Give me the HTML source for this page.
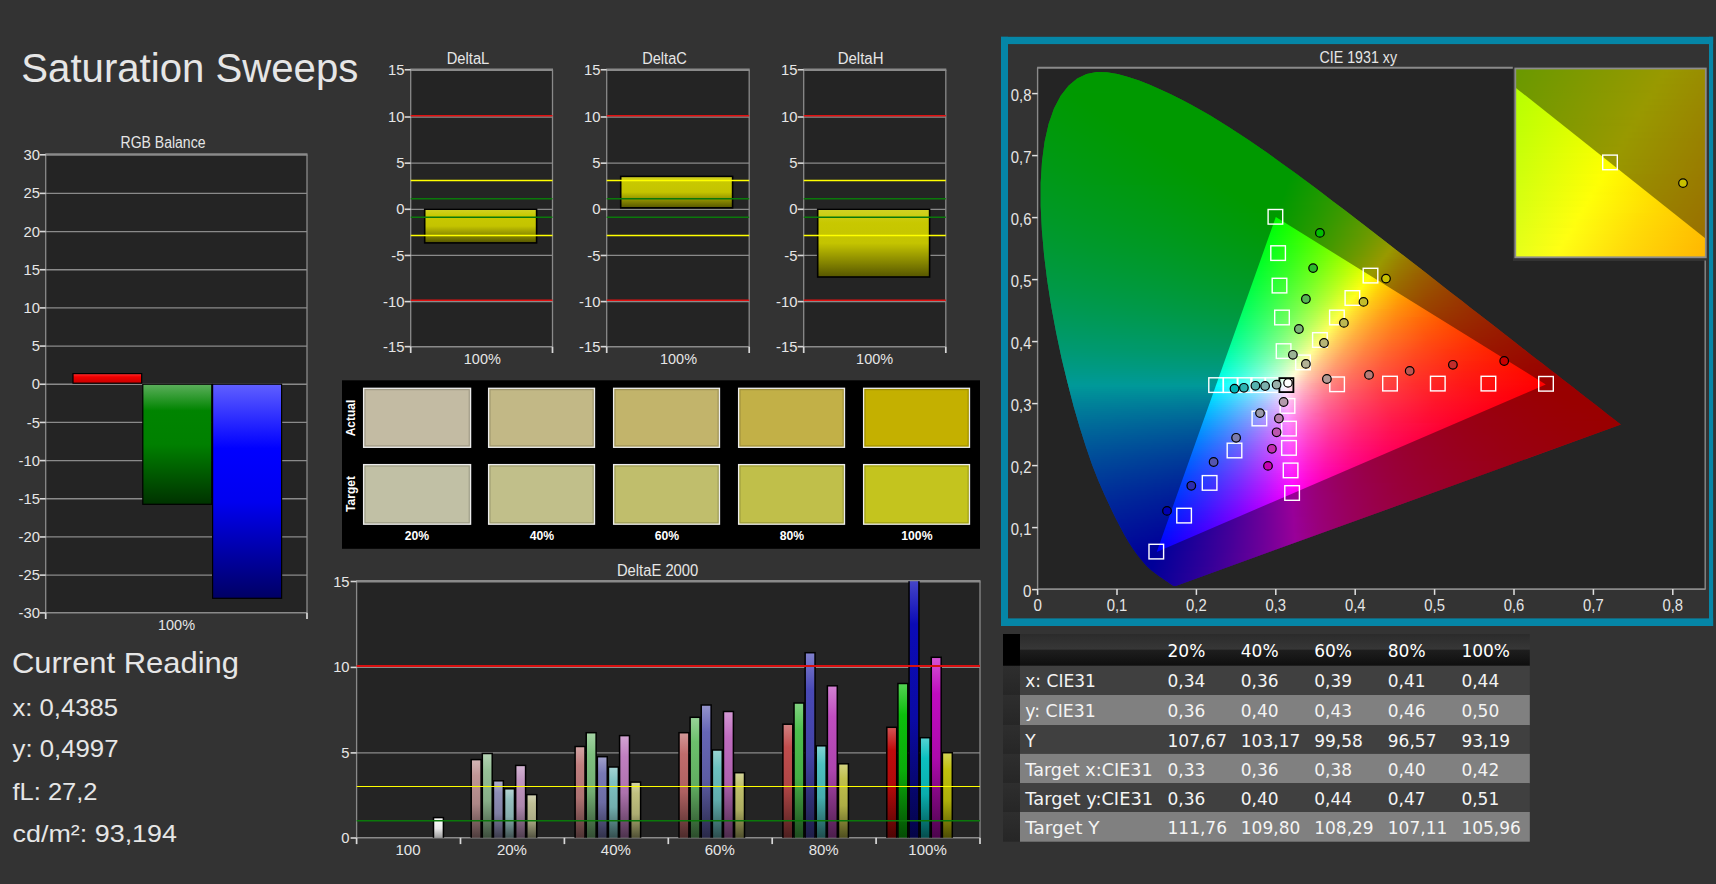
<!DOCTYPE html>
<html><head><meta charset="utf-8"><title>Saturation Sweeps</title>
<style>
html,body{margin:0;padding:0;background:#333333;width:1716px;height:884px;overflow:hidden}
#ov{position:absolute;left:0;top:0;font-family:"Liberation Sans", sans-serif}
#cie{position:absolute;left:1037.6px;top:67.8px;width:667.6000000000001px;height:521.3000000000001px;background:#242424}
#cf{position:absolute;left:0;top:0;width:100%;height:100%;clip-path:polygon(138.2px 518.2px,138.2px 518.2px,137.9px 518.3px,137.6px 518.3px,137.2px 518.3px,136.7px 518.3px,136.1px 518.1px,135.5px 517.9px,134.8px 517.5px,134.1px 517.0px,133.2px 516.4px,132.1px 515.6px,130.5px 514.5px,128.5px 513.2px,126.4px 511.7px,124.3px 510.3px,122.7px 509.2px,121.3px 508.3px,119.9px 507.2px,118.2px 506.0px,116.3px 504.5px,114.3px 502.9px,112.2px 501.1px,110.0px 499.1px,107.6px 496.6px,104.9px 493.5px,101.8px 489.8px,98.5px 485.5px,95.0px 480.4px,91.1px 474.5px,87.0px 467.5px,82.6px 459.3px,77.8px 449.9px,72.5px 439.0px,66.8px 426.7px,60.7px 412.6px,54.5px 396.9px,48.4px 379.2px,42.2px 359.7px,36.0px 338.4px,30.0px 315.3px,24.1px 290.9px,18.7px 265.4px,13.8px 239.4px,9.7px 213.3px,6.5px 187.5px,4.3px 162.4px,3.1px 138.3px,3.1px 115.3px,4.4px 93.8px,7.0px 74.0px,11.0px 56.2px,16.4px 40.7px,23.1px 27.9px,30.9px 17.9px,39.6px 10.7px,49.0px 6.3px,59.0px 4.3px,69.3px 4.4px,79.9px 6.1px,90.7px 9.1px,101.5px 12.8px,112.2px 17.0px,122.8px 21.6px,133.2px 26.5px,143.2px 31.5px,153.2px 36.7px,163.0px 42.1px,172.7px 47.8px,182.3px 53.6px,191.9px 59.7px,201.5px 65.9px,211.0px 72.2px,220.5px 78.7px,230.0px 85.3px,239.5px 92.1px,248.9px 98.9px,258.4px 105.8px,267.8px 112.8px,277.3px 119.8px,286.8px 126.9px,296.2px 134.1px,305.7px 141.3px,315.1px 148.5px,324.5px 155.7px,333.9px 163.0px,343.3px 170.2px,352.6px 177.4px,361.9px 184.6px,371.1px 191.7px,380.2px 198.8px,389.2px 205.8px,398.1px 212.7px,406.9px 219.6px,415.6px 226.4px,424.2px 233.0px,432.6px 239.6px,440.8px 246.0px,448.9px 252.2px,456.7px 258.3px,464.3px 264.2px,471.7px 270.0px,478.7px 275.5px,485.3px 280.6px,491.7px 285.6px,497.8px 290.4px,503.9px 295.0px,509.6px 299.5px,514.7px 303.4px,519.1px 306.8px,523.4px 310.2px,528.6px 314.2px,535.2px 319.3px,542.4px 325.0px,549.1px 330.2px,554.4px 334.3px,558.6px 337.5px,562.1px 340.3px,565.3px 342.8px,568.3px 345.1px,570.9px 347.1px,573.1px 348.9px,574.9px 350.3px,576.4px 351.4px,577.7px 352.4px,578.7px 353.2px,579.6px 353.9px,580.6px 354.7px,581.5px 355.4px,582.3px 356.0px,583.0px 356.5px,583.3px 356.8px,583.4px 356.8px);filter:blur(0.6px)}
#cf i{position:absolute;display:block;height:2px}
#ins{position:absolute;left:1515.3px;top:68.5px;width:190.5px;height:188.8px;overflow:hidden;background:#cc0}
#ins i{position:absolute;display:block;left:0;width:100%;height:3px}

</style></head><body>
<div id="cie"><div id="cf"><i style="left:51.4px;top:3.2px;width:26px;background:linear-gradient(90deg,#00ff00 0px,#00ff00 26px)"></i><i style="left:44.4px;top:5.2px;width:42px;background:linear-gradient(90deg,#00ff00 0px,#00ff00 42px)"></i><i style="left:40.4px;top:7.2px;width:53px;background:linear-gradient(90deg,#00ff00 0px,#00ff00 53px)"></i><i style="left:36.4px;top:9.2px;width:63px;background:linear-gradient(90deg,#00ff00 0px,#00ff00 63px)"></i><i style="left:34.4px;top:11.2px;width:71px;background:linear-gradient(90deg,#00ff00 0px,#00ff00 71px)"></i><i style="left:31.4px;top:13.2px;width:79px;background:linear-gradient(90deg,#00ff00 0px,#00ff00 79px)"></i><i style="left:29.4px;top:15.2px;width:86px;background:linear-gradient(90deg,#00ff00 0px,#00ff00 86px)"></i><i style="left:27.4px;top:17.2px;width:92px;background:linear-gradient(90deg,#00ff00 0px,#00ff00 92px)"></i><i style="left:26.4px;top:19.2px;width:98px;background:linear-gradient(90deg,#00ff01 0px,#00ff00 98px)"></i><i style="left:24.4px;top:21.2px;width:104px;background:linear-gradient(90deg,#00ff02 0px,#00ff00 104px)"></i><i style="left:23.4px;top:23.2px;width:109px;background:linear-gradient(90deg,#00ff03 0px,#00ff00 109px)"></i><i style="left:21.4px;top:25.2px;width:116px;background:linear-gradient(90deg,#00ff04 0px,#00ff00 19px,#00ff00 116px)"></i><i style="left:20.4px;top:27.2px;width:121px;background:linear-gradient(90deg,#00ff05 0px,#00ff00 23px,#00ff00 121px)"></i><i style="left:19.4px;top:29.2px;width:126px;background:linear-gradient(90deg,#00ff06 0px,#00ff00 27px,#00ff00 126px)"></i><i style="left:18.4px;top:31.2px;width:130px;background:linear-gradient(90deg,#00ff07 0px,#00ff00 31px,#00ff00 130px)"></i><i style="left:17.4px;top:33.2px;width:135px;background:linear-gradient(90deg,#00ff08 0px,#00ff00 35px,#00ff00 135px)"></i><i style="left:15.4px;top:35.2px;width:141px;background:linear-gradient(90deg,#00ff09 0px,#00ff00 41px,#00ff00 141px)"></i><i style="left:14.4px;top:37.2px;width:146px;background:linear-gradient(90deg,#00ff0a 0px,#00ff00 45px,#00ff00 146px)"></i><i style="left:13.4px;top:39.2px;width:150px;background:linear-gradient(90deg,#00ff0b 0px,#00ff00 49px,#00ff00 150px)"></i><i style="left:13.4px;top:41.2px;width:154px;background:linear-gradient(90deg,#00ff0c 0px,#00ff00 52px,#00ff00 154px)"></i><i style="left:12.4px;top:43.2px;width:158px;background:linear-gradient(90deg,#00ff0d 0px,#00ff00 56px,#00ff00 158px)"></i><i style="left:11.4px;top:45.2px;width:163px;background:linear-gradient(90deg,#00ff0e 0px,#00ff00 61px,#00ff00 163px)"></i><i style="left:11.4px;top:47.2px;width:166px;background:linear-gradient(90deg,#00ff0e 0px,#00ff00 64px,#00ff00 166px)"></i><i style="left:10.4px;top:49.2px;width:170px;background:linear-gradient(90deg,#00ff0f 0px,#00ff00 68px,#00ff00 170px)"></i><i style="left:9.4px;top:51.2px;width:174px;background:linear-gradient(90deg,#00ff10 0px,#00ff00 72px,#00ff00 174px)"></i><i style="left:9.4px;top:53.2px;width:178px;background:linear-gradient(90deg,#00ff11 0px,#00ff00 76px,#00ff00 178px)"></i><i style="left:8.4px;top:55.2px;width:182px;background:linear-gradient(90deg,#00ff12 0px,#00ff00 80px,#00ff00 182px)"></i><i style="left:7.4px;top:57.2px;width:186px;background:linear-gradient(90deg,#00ff13 0px,#00ff00 84px,#00ff00 186px)"></i><i style="left:7.4px;top:59.2px;width:189px;background:linear-gradient(90deg,#00ff14 0px,#00ff00 87px,#00ff00 189px)"></i><i style="left:6.4px;top:61.2px;width:193px;background:linear-gradient(90deg,#00ff15 0px,#00ff00 91px,#00ff00 193px)"></i><i style="left:6.4px;top:63.2px;width:196px;background:linear-gradient(90deg,#00ff16 0px,#00ff00 95px,#00ff00 196px)"></i><i style="left:6.4px;top:65.2px;width:199px;background:linear-gradient(90deg,#00ff17 0px,#00ff00 98px,#00ff00 199px)"></i><i style="left:5.4px;top:67.2px;width:203px;background:linear-gradient(90deg,#00ff18 0px,#00ff00 102px,#00ff00 203px)"></i><i style="left:5.4px;top:69.2px;width:206px;background:linear-gradient(90deg,#00ff19 0px,#00ff00 105px,#00ff00 206px)"></i><i style="left:4.4px;top:71.2px;width:210px;background:linear-gradient(90deg,#00ff1a 0px,#00ff00 109px,#00ff00 210px)"></i><i style="left:4.4px;top:73.2px;width:213px;background:linear-gradient(90deg,#00ff1b 0px,#00ff00 113px,#00ff00 213px)"></i><i style="left:4.4px;top:75.2px;width:216px;background:linear-gradient(90deg,#00ff1c 0px,#00ff00 116px,#00ff00 216px)"></i><i style="left:3.4px;top:77.2px;width:220px;background:linear-gradient(90deg,#00ff1d 0px,#00ff00 120px,#00ff00 220px)"></i><i style="left:3.4px;top:79.2px;width:223px;background:linear-gradient(90deg,#00ff1e 0px,#00ff00 123px,#00ff00 223px)"></i><i style="left:3.4px;top:81.2px;width:226px;background:linear-gradient(90deg,#00ff1e 0px,#00ff00 127px,#00ff00 226px)"></i><i style="left:3.4px;top:83.2px;width:229px;background:linear-gradient(90deg,#00ff1f 0px,#00ff00 130px,#00ff00 229px)"></i><i style="left:2.4px;top:85.2px;width:232px;background:linear-gradient(90deg,#00ff21 0px,#00ff00 134px,#00ff00 232px)"></i><i style="left:2.4px;top:87.2px;width:235px;background:linear-gradient(90deg,#00ff21 0px,#00ff00 137px,#00ff00 235px)"></i><i style="left:2.4px;top:89.2px;width:238px;background:linear-gradient(90deg,#00ff22 0px,#00ff00 140px,#00ff00 238px)"></i><i style="left:1.4px;top:91.2px;width:242px;background:linear-gradient(90deg,#00ff24 0px,#00ff00 145px,#00ff00 242px)"></i><i style="left:1.4px;top:93.2px;width:245px;background:linear-gradient(90deg,#00ff25 0px,#00ff00 148px,#00ff00 245px)"></i><i style="left:1.4px;top:95.2px;width:247px;background:linear-gradient(90deg,#00ff25 0px,#00ff00 151px,#00ff00 247px)"></i><i style="left:1.4px;top:97.2px;width:250px;background:linear-gradient(90deg,#00ff26 0px,#00ff00 154px,#00ff00 250px)"></i><i style="left:1.4px;top:99.2px;width:253px;background:linear-gradient(90deg,#00ff27 0px,#00ff00 158px,#00ff00 253px)"></i><i style="left:1.4px;top:101.2px;width:256px;background:linear-gradient(90deg,#00ff28 0px,#00ff00 161px,#00ff00 253px,#03ff00 256px)"></i><i style="left:1.4px;top:103.2px;width:258px;background:linear-gradient(90deg,#00ff29 0px,#00ff00 164px,#00ff00 252px,#07ff00 258px)"></i><i style="left:0.4px;top:105.2px;width:262px;background:linear-gradient(90deg,#00ff2b 0px,#00ff00 168px,#00ff00 253px,#0bff00 262px)"></i><i style="left:0.4px;top:107.2px;width:265px;background:linear-gradient(90deg,#00ff2c 0px,#00ff00 171px,#00ff00 252px,#10ff00 265px)"></i><i style="left:0.4px;top:109.2px;width:268px;background:linear-gradient(90deg,#00ff2d 0px,#00ff00 175px,#00ff00 251px,#15ff00 268px)"></i><i style="left:0.4px;top:111.2px;width:270px;background:linear-gradient(90deg,#00ff2e 0px,#00ff00 178px,#00ff00 251px,#19ff00 270px)"></i><i style="left:0.4px;top:113.2px;width:273px;background:linear-gradient(90deg,#00ff2f 0px,#00ff00 181px,#00ff00 250px,#1eff00 273px)"></i><i style="left:0.4px;top:115.2px;width:276px;background:linear-gradient(90deg,#00ff30 0px,#00ff00 184px,#00ff00 249px,#24ff00 276px)"></i><i style="left:0.4px;top:117.2px;width:278px;background:linear-gradient(90deg,#00ff31 0px,#00ff1a 98px,#00ff00 188px,#00ff00 248px,#28ff00 278px)"></i><i style="left:0.4px;top:119.2px;width:281px;background:linear-gradient(90deg,#00ff32 0px,#00ff1b 100px,#00ff00 191px,#00ff00 248px,#2dff00 281px)"></i><i style="left:0.4px;top:121.2px;width:284px;background:linear-gradient(90deg,#00ff33 0px,#00ff1b 102px,#00ff00 194px,#00ff00 247px,#33ff00 284px)"></i><i style="left:0.4px;top:123.2px;width:286px;background:linear-gradient(90deg,#00ff34 0px,#00ff1c 104px,#00ff00 197px,#00ff00 246px,#37ff00 286px)"></i><i style="left:0.4px;top:125.2px;width:289px;background:linear-gradient(90deg,#00ff35 0px,#00ff1c 106px,#00ff00 200px,#00ff00 246px,#3dff00 289px)"></i><i style="left:0.4px;top:127.2px;width:292px;background:linear-gradient(90deg,#00ff36 0px,#00ff1d 108px,#00ff00 204px,#00ff00 245px,#43ff00 292px)"></i><i style="left:0.4px;top:129.2px;width:294px;background:linear-gradient(90deg,#00ff38 0px,#00ff1d 110px,#00ff00 207px,#00ff00 244px,#48ff00 294px)"></i><i style="left:0.4px;top:131.2px;width:297px;background:linear-gradient(90deg,#00ff39 0px,#00ff1e 112px,#00ff00 210px,#00ff00 244px,#4eff00 297px)"></i><i style="left:0.4px;top:133.2px;width:300px;background:linear-gradient(90deg,#00ff3a 0px,#00ff1f 113px,#00ff00 213px,#00ff00 243px,#55ff00 300px)"></i><i style="left:0.4px;top:135.2px;width:302px;background:linear-gradient(90deg,#00ff3b 0px,#00ff20 115px,#00ff00 216px,#00ff00 242px,#5aff00 302px)"></i><i style="left:0.4px;top:137.2px;width:305px;background:linear-gradient(90deg,#00ff3c 0px,#00ff20 117px,#00ff00 220px,#00ff00 241px,#29ff00 270px,#61ff00 305px)"></i><i style="left:0.4px;top:139.2px;width:307px;background:linear-gradient(90deg,#00ff3d 0px,#00ff21 119px,#00ff00 223px,#00ff00 241px,#32ff00 275px,#66ff00 307px)"></i><i style="left:0.4px;top:141.2px;width:310px;background:linear-gradient(90deg,#00ff3f 0px,#00ff22 121px,#00ff00 226px,#00ff00 240px,#33ff00 275px,#6dff00 310px)"></i><i style="left:0.4px;top:143.2px;width:313px;background:linear-gradient(90deg,#00ff40 0px,#00ff27 107px,#00ff00 229px,#00ff00 239px,#35ff00 275px,#74ff00 313px)"></i><i style="left:0.4px;top:145.2px;width:315px;background:linear-gradient(90deg,#00ff41 0px,#00ff26 115px,#00ff00 239px,#3bff00 278px,#7aff00 315px)"></i><i style="left:0.4px;top:147.2px;width:318px;background:linear-gradient(90deg,#00ff42 0px,#00ff25 124px,#00ff00 238px,#3eff00 279px,#81ff00 318px)"></i><i style="left:1.4px;top:149.2px;width:319px;background:linear-gradient(90deg,#00ff43 0px,#00ff25 127px,#00ff01 236px,#3eff00 277px,#87ff00 319px)"></i><i style="left:1.4px;top:151.2px;width:322px;background:linear-gradient(90deg,#00ff45 0px,#00ff26 127px,#00ff02 236px,#46ff00 281px,#8fff00 322px)"></i><i style="left:1.4px;top:153.2px;width:325px;background:linear-gradient(90deg,#00ff46 0px,#00ff27 127px,#00ff04 235px,#0fff00 245px,#49ff00 282px,#98ff00 325px)"></i><i style="left:1.4px;top:155.2px;width:327px;background:linear-gradient(90deg,#00ff47 0px,#00ff29 126px,#00ff05 234px,#14ff00 248px,#49ff00 281px,#9eff00 327px)"></i><i style="left:1.4px;top:157.2px;width:330px;background:linear-gradient(90deg,#00ff49 0px,#00ff2a 125px,#00ff07 233px,#1aff00 251px,#4dff00 282px,#a7ff00 330px)"></i><i style="left:1.4px;top:159.2px;width:332px;background:linear-gradient(90deg,#00ff4a 0px,#00ff2c 126px,#00ff08 233px,#20ff00 254px,#54ff00 285px,#aeff00 332px)"></i><i style="left:1.4px;top:161.2px;width:335px;background:linear-gradient(90deg,#00ff4b 0px,#00ff2d 125px,#00ff0a 232px,#28ff00 258px,#56ff00 285px,#b7ff00 335px)"></i><i style="left:1.4px;top:163.2px;width:338px;background:linear-gradient(90deg,#00ff4d 0px,#00ff2f 124px,#00ff0c 231px,#2eff00 261px,#59ff00 286px,#c0ff00 338px)"></i><i style="left:1.4px;top:165.2px;width:340px;background:linear-gradient(90deg,#00ff4e 0px,#00ff30 125px,#00ff0d 231px,#35ff00 264px,#5fff00 288px,#93ff00 315px,#c7ff00 340px)"></i><i style="left:2.4px;top:167.2px;width:342px;background:linear-gradient(90deg,#00ff4f 0px,#00ff32 123px,#00ff0f 229px,#3cff00 266px,#63ff00 288px,#99ff00 316px,#d1ff00 342px)"></i><i style="left:2.4px;top:169.2px;width:344px;background:linear-gradient(90deg,#00ff50 0px,#00ff33 123px,#00ff11 228px,#42ff00 269px,#65ff00 288px,#9eff00 317px,#d9ff00 344px)"></i><i style="left:2.4px;top:171.2px;width:347px;background:linear-gradient(90deg,#00ff52 0px,#00ff35 123px,#01ff12 228px,#4bff00 273px,#6dff00 291px,#a7ff00 320px,#e4ff00 347px)"></i><i style="left:2.4px;top:173.2px;width:350px;background:linear-gradient(90deg,#00ff53 0px,#00ff36 122px,#00ff14 227px,#52ff00 276px,#71ff00 292px,#aeff00 322px,#eeff00 350px)"></i><i style="left:2.4px;top:175.2px;width:352px;background:linear-gradient(90deg,#00ff55 0px,#00ff38 122px,#00ff16 226px,#5aff00 279px,#73ff00 292px,#b3ff00 323px,#f7ff00 352px)"></i><i style="left:3.4px;top:177.2px;width:354px;background:linear-gradient(90deg,#00ff56 0px,#00ff39 121px,#00ff18 224px,#32ff0c 255px,#62ff00 281px,#71ff00 289px,#b4ff00 321px,#fdff00 352px,#fffc00 354px)"></i><i style="left:3.4px;top:179.2px;width:356px;background:linear-gradient(90deg,#00ff57 0px,#00ff3b 121px,#00ff1a 224px,#34ff0d 255px,#6bff00 285px,#b3ff00 319px,#ffff00 351px,#fff300 356px)"></i><i style="left:3.4px;top:181.2px;width:359px;background:linear-gradient(90deg,#00ff59 0px,#00ff3d 120px,#00ff1c 223px,#39ff0e 257px,#78ff00 290px,#b8ff00 320px,#feff00 349px,#ffe900 359px)"></i><i style="left:3.4px;top:183.2px;width:362px;background:linear-gradient(90deg,#00ff5a 0px,#00ff3e 120px,#00ff1e 222px,#37ff10 255px,#76ff01 288px,#b9ff00 319px,#ffff00 348px,#ffdf00 362px)"></i><i style="left:3.4px;top:185.2px;width:364px;background:linear-gradient(90deg,#00ff5c 0px,#00ff40 120px,#01ff1f 222px,#3bff12 256px,#78ff03 288px,#b9ff00 318px,#feff00 346px,#ffd700 364px)"></i><i style="left:3.4px;top:187.2px;width:367px;background:linear-gradient(90deg,#00ff5e 0px,#00ff42 119px,#00ff21 221px,#39ff14 254px,#77ff06 286px,#90ff00 298px,#c6ff00 322px,#ffff00 345px,#ffce00 367px)"></i><i style="left:4.4px;top:189.2px;width:368px;background:linear-gradient(90deg,#00ff5f 0px,#00ff44 118px,#00ff23 219px,#39ff16 252px,#77ff08 284px,#99ff00 300px,#feff00 342px,#ffc700 368px)"></i><i style="left:4.4px;top:191.2px;width:371px;background:linear-gradient(90deg,#00ff61 0px,#00ff45 118px,#00ff25 218px,#35ff19 249px,#75ff0a 282px,#a3ff00 303px,#fdff00 340px,#ffd900 357px,#ffbf00 371px)"></i><i style="left:4.4px;top:193.2px;width:373px;background:linear-gradient(90deg,#00ff62 0px,#00ff47 118px,#00ff27 218px,#3aff1a 251px,#78ff0c 282px,#acff00 306px,#feff00 339px,#ffd800 356px,#ffb900 373px)"></i><i style="left:4.4px;top:195.2px;width:376px;background:linear-gradient(90deg,#00ff64 0px,#00ff49 117px,#00ff29 217px,#38ff1d 249px,#76ff0f 280px,#b7ff00 309px,#fffe00 338px,#ffd400 356px,#ffb100 376px)"></i><i style="left:5.4px;top:197.2px;width:378px;background:linear-gradient(90deg,#00ff65 0px,#00ff4b 116px,#00ff2b 215px,#36ff1f 246px,#76ff11 278px,#c3ff00 312px,#ffff00 335px,#ffd100 355px,#ffaa00 378px)"></i><i style="left:5.4px;top:199.2px;width:380px;background:linear-gradient(90deg,#00ff67 0px,#00ff4c 116px,#01ff2d 215px,#3aff21 247px,#76ff13 277px,#ceff00 315px,#fffe00 334px,#ffce00 355px,#ffa400 380px)"></i><i style="left:5.4px;top:201.2px;width:383px;background:linear-gradient(90deg,#00ff69 0px,#00ff4e 116px,#00ff2f 214px,#3aff23 246px,#79ff15 277px,#daff00 318px,#ffff00 332px,#ffca00 355px,#ff9d00 383px)"></i><i style="left:5.4px;top:203.2px;width:385px;background:linear-gradient(90deg,#00ff6a 0px,#00ff50 115px,#00ff32 213px,#38ff26 244px,#77ff18 275px,#b8ff0a 303px,#e5ff00 321px,#feff00 330px,#ffc500 356px,#ff9800 385px)"></i><i style="left:6.4px;top:205.2px;width:387px;background:linear-gradient(90deg,#00ff6c 0px,#00ff52 114px,#00ff34 211px,#34ff29 240px,#75ff1b 272px,#b8ff0c 301px,#ffff00 328px,#ffe100 340px,#ffc400 354px,#ffa900 370px,#ff9200 387px)"></i><i style="left:6.4px;top:207.2px;width:389px;background:linear-gradient(90deg,#00ff6e 0px,#00ff54 114px,#00ff36 211px,#39ff2a 242px,#78ff1d 272px,#b9ff0f 300px,#feff00 326px,#ffdb00 341px,#ffbf00 355px,#ffa500 371px,#ff8d00 389px)"></i><i style="left:6.4px;top:209.2px;width:392px;background:linear-gradient(90deg,#00ff6f 0px,#00ff56 114px,#00ff38 210px,#37ff2d 240px,#76ff20 270px,#b8ff12 298px,#ffff03 325px,#ffdb00 339px,#ffbc00 355px,#ffa100 372px,#ff8700 392px)"></i><i style="left:6.4px;top:211.2px;width:395px;background:linear-gradient(90deg,#00ff71 0px,#00ff58 113px,#00ff3b 209px,#35ff2f 238px,#76ff22 269px,#b9ff14 297px,#feff06 323px,#ffe600 333px,#ffb900 355px,#ff9b00 374px,#ff8200 395px)"></i><i style="left:7.4px;top:213.2px;width:396px;background:linear-gradient(90deg,#00ff73 0px,#00ff5a 113px,#01ff3d 208px,#39ff31 238px,#76ff25 267px,#b7ff18 294px,#fffe09 321px,#ffdb00 335px,#ffb500 354px,#ff9700 374px,#ff7e00 396px)"></i><i style="left:7.4px;top:215.2px;width:399px;background:linear-gradient(90deg,#00ff75 0px,#00ff5c 112px,#00ff3f 207px,#39ff34 237px,#77ff27 266px,#b8ff1a 293px,#feff0c 319px,#ffce00 339px,#ffb200 354px,#ff9300 375px,#ff7800 399px)"></i><i style="left:7.4px;top:217.2px;width:401px;background:linear-gradient(90deg,#00ff76 0px,#00ff5e 112px,#00ff42 206px,#37ff37 235px,#75ff2a 264px,#b4ff1e 290px,#fffe0f 318px,#ffd304 335px,#ffaf00 354px,#ff9000 376px,#ff7400 401px)"></i><i style="left:8.4px;top:219.2px;width:403px;background:linear-gradient(90deg,#00ff78 0px,#00ff60 110px,#00ff44 204px,#35ff3a 232px,#75ff2d 262px,#b7ff20 289px,#ffff12 315px,#ffd206 333px,#ffbc00 344px,#ffac00 353px,#ff8c00 376px,#ff7000 403px)"></i><i style="left:8.4px;top:221.2px;width:405px;background:linear-gradient(90deg,#00ff7a 0px,#00ff62 110px,#00ff46 204px,#38ff3b 233px,#76ff30 261px,#b3ff24 286px,#fffe15 314px,#ffd008 332px,#ffa900 353px,#ff8800 377px,#ff6c00 405px)"></i><i style="left:8.4px;top:223.2px;width:408px;background:linear-gradient(90deg,#00ff7c 0px,#00ff65 110px,#00ff49 203px,#38ff3e 232px,#78ff32 261px,#b9ff26 287px,#ffff18 312px,#ffcf0a 331px,#ffa600 353px,#ff8500 378px,#ff6700 408px)"></i><i style="left:9.4px;top:225.2px;width:410px;background:linear-gradient(90deg,#00ff7e 0px,#00ff67 109px,#00ff4b 201px,#34ff42 228px,#74ff36 257px,#b2ff2a 282px,#fffd1b 310px,#ffcd0d 329px,#ffa400 352px,#ff8000 379px,#ff6300 410px)"></i><i style="left:9.4px;top:227.2px;width:412px;background:linear-gradient(90deg,#00ff80 0px,#00ff69 109px,#01ff4e 201px,#3aff43 230px,#79ff37 258px,#b8ff2c 283px,#ffff1f 308px,#ffcc0f 328px,#ffa202 351px,#ff7e00 379px,#ff5f00 412px)"></i><i style="left:9.4px;top:229.2px;width:415px;background:linear-gradient(90deg,#00ff82 0px,#00ff6b 108px,#00ff51 200px,#3aff46 229px,#77ff3b 256px,#b9ff2f 282px,#feff22 306px,#ffca11 327px,#ff9f04 351px,#ff9400 359px,#ff7a00 380px,#ff5b00 415px)"></i><i style="left:10.4px;top:231.2px;width:416px;background:linear-gradient(90deg,#00ff84 0px,#00ff6e 107px,#00ff53 198px,#36ff4a 225px,#75ff3e 253px,#b7ff32 279px,#fcff26 303px,#ffc713 326px,#ff9c05 350px,#ff8c00 362px,#ff7700 380px,#ff5800 416px)"></i><i style="left:10.4px;top:233.2px;width:419px;background:linear-gradient(90deg,#00ff86 0px,#00ff70 107px,#01ff56 198px,#3aff4c 226px,#78ff41 253px,#b8ff35 278px,#feff29 302px,#ffc716 324px,#ff9a07 350px,#ff8600 365px,#ff7400 381px,#ff5400 419px)"></i><i style="left:10.4px;top:235.2px;width:421px;background:linear-gradient(90deg,#00ff88 0px,#00ff72 107px,#00ff59 197px,#3aff4f 225px,#78ff44 252px,#b9ff38 277px,#fdff2d 300px,#ffc418 324px,#ff9708 350px,#ff8000 368px,#ff7100 382px,#ff5100 421px)"></i><i style="left:10.4px;top:237.2px;width:424px;background:linear-gradient(90deg,#00ff8a 0px,#00ff75 106px,#00ff5b 196px,#37ff52 223px,#76ff47 250px,#b7ff3c 275px,#feff30 299px,#ffe025 310px,#ffc41b 322px,#ff950a 349px,#ff7a00 371px,#ff6e00 383px,#ff4e00 424px)"></i><i style="left:11.4px;top:239.2px;width:426px;background:linear-gradient(90deg,#00ff8c 0px,#00ff77 105px,#00ff5e 194px,#33ff56 219px,#74ff4b 247px,#b6ff40 272px,#fdff34 296px,#ffda25 310px,#ffc11c 321px,#ff910b 349px,#ff7300 374px,#ff5e00 398px,#ff4a00 426px)"></i><i style="left:11.4px;top:241.2px;width:428px;background:linear-gradient(90deg,#00ff8e 0px,#00ff79 105px,#00ff61 194px,#3bff57 222px,#79ff4d 248px,#b9ff42 272px,#ffff37 295px,#ffdd2a 307px,#ffc11f 319px,#ffa715 333px,#ff900d 348px,#ff6e00 377px,#ff4700 428px)"></i><i style="left:12.4px;top:243.2px;width:430px;background:linear-gradient(90deg,#00ff90 0px,#00ff7c 104px,#00ff64 192px,#39ff5b 219px,#77ff51 245px,#b8ff46 269px,#fdff3b 292px,#ffdb2d 305px,#ffc022 317px,#ffa518 331px,#ff8d0e 347px,#ff6900 379px,#ff4400 430px)"></i><i style="left:12.4px;top:245.2px;width:432px;background:linear-gradient(90deg,#00ff92 0px,#00ff7e 104px,#00ff67 191px,#37ff5e 217px,#75ff54 243px,#b9ff4a 268px,#ffff3e 291px,#ffdf31 302px,#ffc025 315px,#ffa41a 330px,#ff8c10 346px,#ff6400 382px,#ff4100 432px)"></i><i style="left:12.4px;top:247.2px;width:435px;background:linear-gradient(90deg,#00ff95 0px,#00ff81 104px,#01ff6a 191px,#3bff61 218px,#78ff57 243px,#baff4d 267px,#feff42 289px,#ffda33 302px,#ffbc27 315px,#ffa11b 330px,#ff8911 346px,#ff6000 385px,#ff3e00 435px)"></i><i style="left:13.4px;top:249.2px;width:436px;background:linear-gradient(90deg,#00ff97 0px,#00ff84 103px,#00ff6d 189px,#3bff64 216px,#78ff5b 241px,#b8ff51 264px,#ffff46 287px,#ffdb37 299px,#ffbb29 313px,#ff9f1d 328px,#ff8613 345px,#ff6f09 365px,#ff5b00 387px,#ff3c00 436px)"></i><i style="left:13.4px;top:251.2px;width:439px;background:linear-gradient(90deg,#00ff99 0px,#00ff86 102px,#00ff70 188px,#39ff68 214px,#76ff5f 239px,#b9ff55 263px,#feff4a 285px,#ffd739 299px,#ffb92b 312px,#ff9e1f 327px,#ff8514 344px,#ff6c0a 366px,#ff5600 391px,#ff3900 439px)"></i><i style="left:13.4px;top:253.2px;width:442px;background:linear-gradient(90deg,#00ff9c 0px,#00ff89 102px,#00ff73 187px,#34ff6c 211px,#74ff62 237px,#b7ff59 261px,#fcff4f 283px,#ffd53b 298px,#ffb82e 311px,#ff9b21 327px,#ff8216 344px,#ff690a 367px,#ff5200 394px,#ff3600 442px)"></i><i style="left:14.4px;top:255.2px;width:443px;background:linear-gradient(90deg,#00ff9e 0px,#00ff8c 101px,#00ff76 186px,#3bff6e 212px,#77ff66 236px,#b8ff5c 259px,#feff52 281px,#ffd63f 295px,#ffb630 309px,#ff9923 325px,#ff8017 343px,#ff650b 368px,#ff4e00 396px,#ff3300 443px)"></i><i style="left:14.4px;top:257.2px;width:446px;background:linear-gradient(90deg,#00ffa0 0px,#00ff8f 101px,#00ff7a 185px,#3aff72 211px,#77ff69 235px,#b9ff60 258px,#fdff57 279px,#ffd442 294px,#ffb433 308px,#ff9825 324px,#ff7d18 343px,#ff620b 369px,#ff4a00 399px,#ff3100 446px)"></i><i style="left:15.4px;top:259.2px;width:447px;background:linear-gradient(90deg,#00ffa3 0px,#00ff92 99px,#00ff7d 183px,#35ff76 207px,#75ff6d 232px,#b7ff64 255px,#ffff5b 277px,#ffd848 290px,#ffb536 305px,#ff9627 322px,#ff7c1a 341px,#ff5f0c 369px,#ff4700 401px,#ff2e00 447px)"></i><i style="left:15.4px;top:261.2px;width:450px;background:linear-gradient(90deg,#00ffa5 0px,#00ff95 99px,#01ff80 183px,#3aff79 208px,#78ff71 232px,#b8ff68 254px,#fdff5f 275px,#ffd449 290px,#ffb138 305px,#ff9329 322px,#ff791c 341px,#ff5c0d 370px,#ff4200 405px,#ff2c00 450px)"></i><i style="left:15.4px;top:263.2px;width:452px;background:linear-gradient(90deg,#00ffa8 0px,#00ff97 99px,#00ff84 182px,#3aff7d 207px,#79ff75 231px,#b9ff6c 253px,#ffff63 274px,#ffd44d 288px,#ffb23b 303px,#ff932c 320px,#ff781d 340px,#ff590d 371px,#ff3f00 408px,#ff2a00 452px)"></i><i style="left:16.4px;top:265.2px;width:454px;background:linear-gradient(90deg,#00ffaa 0px,#00ff9a 98px,#00ff88 180px,#37ff81 204px,#76ff79 228px,#b7ff71 250px,#fdff68 271px,#ffd350 286px,#ffb03e 301px,#ff902d 319px,#ff751f 339px,#ff560e 371px,#ff3c00 410px,#ff2700 454px)"></i><i style="left:16.4px;top:267.2px;width:457px;background:linear-gradient(90deg,#00ffad 0px,#00ff9e 97px,#00ff8b 179px,#32ff85 201px,#74ff7d 226px,#b5ff75 248px,#ffff6c 270px,#ffd656 283px,#ffb041 299px,#ff9030 317px,#ff7421 338px,#ff530f 372px,#ff3900 413px,#ff2500 457px)"></i><i style="left:17.4px;top:269.2px;width:458px;background:linear-gradient(90deg,#00ffaf 0px,#00ffa0 97px,#00ff8f 178px,#3aff88 202px,#77ff81 225px,#baff79 247px,#feff71 267px,#ffd258 282px,#ffaf44 297px,#ff8f32 315px,#ff7322 336px,#ff510f 372px,#ff3500 415px,#ff2300 458px)"></i><i style="left:17.4px;top:271.2px;width:461px;background:linear-gradient(90deg,#00ffb2 0px,#00ffa4 96px,#00ff93 177px,#37ff8c 200px,#75ff85 223px,#b7ff7e 245px,#fcff76 265px,#fffe76 266px,#ffcd59 282px,#ffab45 297px,#ff8c34 315px,#ff7024 336px,#ff4e10 373px,#ff3200 418px,#ff2000 461px)"></i><i style="left:17.4px;top:273.2px;width:463px;background:linear-gradient(90deg,#00ffb5 0px,#00ffa7 96px,#00ff96 176px,#34ff91 198px,#75ff8a 222px,#b9ff82 244px,#feff7b 264px,#ffd15f 279px,#ffab49 295px,#ff8a36 314px,#ff6f26 335px,#ff4d12 371px,#ff3202 416px,#ff1e00 463px)"></i><i style="left:18.4px;top:275.2px;width:465px;background:linear-gradient(90deg,#00ffb8 0px,#00ffaa 95px,#01ff9a 175px,#3cff94 199px,#78ff8e 221px,#baff87 242px,#fcff80 261px,#fffe7f 262px,#ffcf62 277px,#ffa94c 293px,#ff8838 312px,#ff6c27 334px,#ff4b13 370px,#ff3003 415px,#ff1c00 465px)"></i><i style="left:18.4px;top:277.2px;width:467px;background:linear-gradient(90deg,#00ffbb 0px,#00ffae 95px,#00ff9e 174px,#3cff98 198px,#79ff92 220px,#bbff8b 241px,#feff85 260px,#ffd067 275px,#ffaa50 291px,#ff883b 310px,#ff6b29 333px,#ff4a15 369px,#ff3004 413px,#ff2900 428px,#ff1a00 467px)"></i><i style="left:19.4px;top:279.2px;width:469px;background:linear-gradient(90deg,#00ffbd 0px,#00ffa2 172px,#36ff9d 194px,#76ff97 217px,#b9ff90 238px,#fdff8a 257px,#ffcb69 274px,#ffa651 290px,#ff853c 309px,#ff682a 332px,#ff4816 368px,#ff2e05 412px,#ff2600 430px,#ff1800 469px)"></i><i style="left:19.4px;top:281.2px;width:471px;background:linear-gradient(90deg,#00ffc0 0px,#00ffa6 171px,#33ffa2 192px,#74ff9c 215px,#b7ff96 236px,#ffff8f 256px,#ffce6f 271px,#ffa655 288px,#ff843f 308px,#ff672c 331px,#ff4e1c 358px,#ff380d 390px,#ff2400 433px,#ff1700 471px)"></i><i style="left:19.4px;top:283.2px;width:474px;background:linear-gradient(90deg,#00ffc3 0px,#00ffaa 171px,#3bffa5 194px,#77ffa0 215px,#b8ff9a 235px,#fdff94 254px,#ffcd73 270px,#ffa558 287px,#ff8241 307px,#ff652e 330px,#ff4c1d 358px,#ff360e 391px,#ff2100 436px,#ff1500 474px)"></i><i style="left:20.4px;top:285.2px;width:476px;background:linear-gradient(90deg,#00ffc6 0px,#00ffaf 169px,#38ffaa 191px,#78ffa5 213px,#b9ffa0 233px,#ffff9a 252px,#ffcd78 267px,#ffa55c 284px,#ff8143 305px,#ff632f 329px,#ff4a1e 357px,#ff340f 391px,#ff1f00 438px,#ff1300 476px)"></i><i style="left:20.4px;top:287.2px;width:478px;background:linear-gradient(90deg,#00ffc9 0px,#00ffb3 168px,#35ffaf 189px,#75ffaa 211px,#b7ffa5 231px,#fdff9f 250px,#ffcb7b 266px,#ffa35f 283px,#ff7f45 304px,#ff6231 328px,#ff481f 357px,#ff3210 391px,#ff1c00 442px,#ff1100 478px)"></i><i style="left:21.4px;top:289.2px;width:480px;background:linear-gradient(90deg,#00ffcd 0px,#01ffb8 167px,#3bffb3 189px,#79ffaf 210px,#b8ffaa 229px,#ffffa5 248px,#ffcc80 263px,#ffa161 281px,#ff7d48 302px,#ff6033 326px,#ff4720 355px,#ff3111 390px,#ff1a00 444px,#ff0f00 480px)"></i><i style="left:21.4px;top:291.2px;width:482px;background:linear-gradient(90deg,#00ffd0 0px,#00ffbc 166px,#38ffb8 187px,#73ffb4 207px,#afffb0 225px,#fffca9 247px,#ffca84 262px,#ff9f64 280px,#ff7c4a 301px,#ff5e34 326px,#ff4421 356px,#ff2f11 391px,#ff1800 447px,#ff0d00 482px)"></i><i style="left:22.4px;top:293.2px;width:484px;background:linear-gradient(90deg,#00ffd3 0px,#00ffc1 164px,#35ffbd 184px,#73ffb9 205px,#b3ffb5 224px,#fffeb0 244px,#ffcb89 259px,#ffa068 277px,#ff7c4d 298px,#ff5c36 324px,#ff3f1f 360px,#ff260d 405px,#ff1600 449px,#ff0c00 484px)"></i><i style="left:22.4px;top:295.2px;width:486px;background:linear-gradient(90deg,#00ffd6 0px,#00ffc6 163px,#2fffc3 181px,#71ffbf 203px,#aaffbc 220px,#feffb7 242px,#fffcb4 243px,#ffc98d 258px,#ff9e6b 276px,#ff794f 298px,#ff5a37 324px,#ff3d20 360px,#ff250d 405px,#ff1300 452px,#ff0a00 486px)"></i><i style="left:23.4px;top:297.2px;width:488px;background:linear-gradient(90deg,#00ffda 0px,#00ffca 162px,#3affc7 183px,#78ffc4 203px,#b6ffc1 221px,#fffebc 240px,#ffca93 255px,#ff9c6e 274px,#ff7751 296px,#ff5939 322px,#ff3b21 359px,#ff230e 404px,#ff1100 455px,#ff0800 488px)"></i><i style="left:23.4px;top:299.2px;width:491px;background:linear-gradient(90deg,#00ffdd 0px,#00ffcf 161px,#37ffcd 181px,#72ffca 200px,#b7ffc7 220px,#feffc3 238px,#fffbc0 239px,#ffc896 254px,#ff9a71 273px,#ff7553 295px,#ff573b 321px,#ff3a23 358px,#ff220f 404px,#ff0f00 458px,#ff0700 491px)"></i><i style="left:24.4px;top:301.2px;width:492px;background:linear-gradient(90deg,#00ffe1 0px,#00ffd4 159px,#31ffd2 177px,#72ffd0 198px,#b1ffcd 216px,#fffdc8 236px,#ffc99c 251px,#ff9a76 270px,#ff7557 292px,#ff563d 319px,#ff3924 356px,#ff2110 402px,#ff0d00 460px,#ff0500 492px)"></i><i style="left:24.4px;top:303.2px;width:495px;background:linear-gradient(90deg,#00ffe4 0px,#01ffda 159px,#3cffd7 180px,#79ffd5 199px,#baffd3 217px,#ffffd0 234px,#ffe0b6 242px,#ffc6a0 250px,#ff9a7a 268px,#ff7459 291px,#ff543e 318px,#ff3725 356px,#ff1f11 402px,#ff0b00 463px,#ff0400 495px)"></i><i style="left:25.4px;top:305.2px;width:496px;background:linear-gradient(90deg,#00ffe8 0px,#00ffdf 157px,#39ffdd 177px,#73ffdb 195px,#b0ffd9 212px,#fffdd5 232px,#ffc7a6 247px,#ff997d 266px,#ff725b 289px,#ff5340 316px,#ff3627 354px,#ff1e13 400px,#ff0900 465px,#ff0200 496px)"></i><i style="left:25.4px;top:307.2px;width:499px;background:linear-gradient(90deg,#00ffec 0px,#00ffe4 156px,#36ffe3 175px,#77ffe1 195px,#b9ffdf 213px,#ffffdd 230px,#ffe3c4 237px,#ffc8ac 245px,#ff9982 264px,#ff725f 287px,#ff5142 315px,#ff3428 353px,#ff1d13 400px,#ff0700 469px,#ff0100 499px)"></i><i style="left:26.4px;top:309.2px;width:501px;background:linear-gradient(90deg,#00fff0 0px,#00ffea 154px,#30ffe9 171px,#70ffe8 191px,#abffe6 207px,#fffce2 228px,#ffddc5 236px,#ffc3ae 244px,#ff9583 263px,#ff6f60 286px,#ff4f43 314px,#ff3329 352px,#ff1b14 400px,#ff0600 471px,#ff0000 501px)"></i><i style="left:26.4px;top:311.2px;width:503px;background:linear-gradient(90deg,#00fff4 0px,#00ffef 154px,#3cffef 174px,#78ffee 192px,#b8ffed 209px,#fffeeb 226px,#ffdecd 234px,#ffc4b4 242px,#ff9588 261px,#ff6e64 284px,#ff4e45 313px,#ff312b 351px,#ff1a15 399px,#ff0400 474px,#ff0000 503px)"></i><i style="left:27.4px;top:313.2px;width:505px;background:linear-gradient(90deg,#00fff8 0px,#00fff5 152px,#35fff5 170px,#71fff4 188px,#a9fff4 203px,#fefff3 223px,#fffcf0 224px,#ffdcd1 232px,#ffc1b8 240px,#ff9189 260px,#ff6a64 284px,#ff4a46 313px,#ff2e2b 352px,#ff1815 400px,#ff0200 476px,#ff0000 505px)"></i><i style="left:27.4px;top:315.2px;width:507px;background:linear-gradient(90deg,#00fffc 0px,#00fffb 151px,#32fffb 168px,#72fffb 187px,#b2fffb 204px,#fffefa 222px,#ffddd9 230px,#ffc2bf 238px,#ffa9a6 247px,#ff918e 258px,#ff6a68 282px,#ff4a48 311px,#ff2e2d 349px,#ff1817 397px,#ff0100 479px,#ff0000 507px)"></i><i style="left:28.4px;top:317.2px;width:509px;background:linear-gradient(90deg,#00feff 0px,#01fdff 150px,#3bfcff 169px,#78fcff 187px,#bafcff 204px,#fffbff 220px,#ffdbde 228px,#ffc0c3 236px,#ffa7aa 245px,#ff8f91 256px,#ff686a 280px,#ff4849 310px,#ff2b2d 350px,#ff1516 400px,#ff0001 476px,#ff0000 509px)"></i><i style="left:28.4px;top:319.2px;width:511px;background:linear-gradient(90deg,#00faff 0px,#00f7ff 149px,#3cf6ff 169px,#79f5ff 187px,#baf5ff 204px,#fff4ff 220px,#ffd5df 228px,#ffbbc4 236px,#ffa3ab 245px,#ff8b92 256px,#ff646a 281px,#ff444a 311px,#ff292d 352px,#ff1216 404px,#ff0003 471px,#ff0000 511px)"></i><i style="left:29.4px;top:321.2px;width:513px;background:linear-gradient(90deg,#00f6ff 0px,#00f1ff 147px,#31f0ff 164px,#70efff 183px,#b6eeff 202px,#feedff 219px,#ffe9fb 220px,#ffcbdc 228px,#ffb0bf 237px,#ff8390 257px,#ff5e68 282px,#ff4049 312px,#ff252c 355px,#ff0f15 409px,#ff0005 466px,#ff0000 513px)"></i><i style="left:29.4px;top:323.2px;width:516px;background:linear-gradient(90deg,#00f2ff 0px,#01ebff 147px,#39eaff 166px,#74e9ff 184px,#abe7ff 199px,#fee5ff 219px,#ffe3fc 220px,#ffc6dd 228px,#ffabc0 237px,#ff8091 257px,#ff5b69 282px,#ff3d49 313px,#ff222b 358px,#ff0c14 414px,#ff0006 461px,#ff0000 491px,#ff0000 516px)"></i><i style="left:30.4px;top:325.2px;width:517px;background:linear-gradient(90deg,#00eeff 0px,#00e6ff 145px,#3ae4ff 165px,#75e2ff 183px,#afe1ff 199px,#ffdcfd 219px,#ffc0dd 227px,#ffa6c1 236px,#ff7c92 256px,#ff586a 281px,#ff3b4a 312px,#ff202b 358px,#ff0a13 417px,#ff0008 456px,#ff0000 493px,#ff0000 517px)"></i><i style="left:30.4px;top:327.2px;width:520px;background:linear-gradient(90deg,#00eaff 0px,#00e0ff 144px,#36deff 163px,#73dcff 182px,#b0daff 199px,#ffd6fd 219px,#ffbade 227px,#ffa1c2 236px,#ff8ba8 246px,#ff7791 257px,#ff556a 282px,#ff384a 313px,#ff1d2b 361px,#ff0712 423px,#ff000a 451px,#ff0000 496px,#ff0000 520px)"></i><i style="left:31.4px;top:329.2px;width:521px;background:linear-gradient(90deg,#00e6ff 0px,#00dbff 142px,#31d9ff 160px,#74d6ff 181px,#b4d4ff 199px,#ffcffe 218px,#ffb5df 226px,#ff9dc2 235px,#ff7392 256px,#ff516a 282px,#ff364a 313px,#ff1a2a 363px,#ff0411 427px,#ff000c 446px,#ff0000 498px,#ff0000 521px)"></i><i style="left:31.4px;top:331.2px;width:524px;background:linear-gradient(90deg,#00e2ff 0px,#01d6ff 142px,#3cd3ff 163px,#78d0ff 182px,#b8cdff 200px,#ffc9fe 218px,#ffb0e0 226px,#ff98c3 235px,#ff6f93 256px,#ff4e6b 282px,#ff334a 314px,#ff1729 366px,#ff0210 434px,#ff0000 501px,#ff0000 524px)"></i><i style="left:32.4px;top:333.2px;width:525px;background:linear-gradient(90deg,#00deff 0px,#00d1ff 140px,#3aceff 161px,#79caff 181px,#b8c7ff 199px,#ffc3ff 217px,#ffaae0 225px,#ff94c4 234px,#ff6c94 255px,#ff4b6c 281px,#ff314b 313px,#ff152a 366px,#ff0010 435px,#ff0000 504px,#ff0000 525px)"></i><i style="left:32.4px;top:335.2px;width:528px;background:linear-gradient(90deg,#00daff 0px,#00ccff 139px,#36c9ff 159px,#76c5ff 180px,#b8c1ff 199px,#ffbdff 217px,#ffa3de 226px,#ff8dc2 235px,#ff6793 256px,#ff486c 282px,#ff2e4c 314px,#ff142b 365px,#ff0012 430px,#ff0000 507px,#ff0000 528px)"></i><i style="left:33.4px;top:337.2px;width:530px;background:linear-gradient(90deg,#00d7ff 0px,#01c7ff 138px,#3ac3ff 159px,#74c0ff 178px,#b9bbff 198px,#feb7ff 216px,#ffb4fc 217px,#ff9bdb 226px,#ff86c0 235px,#ff6292 256px,#ff436a 283px,#ff2b4b 315px,#ff132c 363px,#ff0014 424px,#ff0002 501px,#ff0000 530px)"></i><i style="left:33.4px;top:339.2px;width:532px;background:linear-gradient(90deg,#00d3ff 0px,#00c2ff 137px,#39beff 158px,#72baff 177px,#abb7ff 194px,#feb1ff 216px,#ffaffc 217px,#ff96dc 226px,#ff82c1 235px,#ff5e91 257px,#ff406a 284px,#ff284b 316px,#ff122e 362px,#ff0016 420px,#ff0003 495px,#ff0000 532px)"></i><i style="left:34.4px;top:341.2px;width:534px;background:linear-gradient(90deg,#00cfff 0px,#00bdff 135px,#34baff 155px,#73b5ff 176px,#aeb1ff 194px,#ffa9fd 216px,#ff91dc 225px,#ff7ec2 234px,#ff5a92 256px,#ff3d6b 283px,#ff264b 316px,#ff112f 360px,#ff0019 414px,#ff0005 490px,#ff0000 534px)"></i><i style="left:35.4px;top:343.2px;width:535px;background:linear-gradient(90deg,#00cbff 0px,#00b9ff 133px,#30b5ff 152px,#70b0ff 174px,#afabff 193px,#ffa4fd 215px,#ff8ddd 224px,#ff7ac3 233px,#ff5793 255px,#ff3b6c 282px,#ff244c 315px,#ff1031 357px,#ff001b 409px,#ff0006 484px,#ff0000 535px)"></i><i style="left:35.4px;top:345.2px;width:538px;background:linear-gradient(90deg,#00c8ff 0px,#01b4ff 133px,#3ab0ff 155px,#74abff 175px,#b3a6ff 194px,#ff9ffe 215px,#ff88de 224px,#ff76c4 233px,#ff63aa 244px,#ff5393 256px,#ff386c 283px,#ff214c 316px,#ff0f32 356px,#ff001d 404px,#ff0008 481px,#ff0000 538px)"></i><i style="left:36.4px;top:347.2px;width:539px;background:linear-gradient(90deg,#00c4ff 0px,#00b0ff 131px,#39abff 153px,#75a6ff 174px,#b6a0ff 194px,#ff99fe 214px,#ff84df 223px,#ff72c5 232px,#ff60ab 243px,#ff5093 255px,#ff356d 282px,#ff1f4c 316px,#ff0e34 354px,#ff001f 399px,#ff0009 476px,#ff0000 539px)"></i><i style="left:36.4px;top:349.2px;width:542px;background:linear-gradient(90deg,#00c1ff 0px,#00acff 130px,#34a7ff 151px,#76a1ff 174px,#b79bff 194px,#ff94ff 214px,#ff7fdf 223px,#ff6ec5 232px,#ff4d94 255px,#ff326d 283px,#ff1c4c 317px,#ff0d36 352px,#ff0022 394px,#ff000b 473px,#ff0000 542px)"></i><i style="left:37.4px;top:351.2px;width:544px;background:linear-gradient(90deg,#00bdff 0px,#01a7ff 129px,#3ba2ff 152px,#779cff 173px,#ba96ff 194px,#ff8fff 213px,#ff7be0 222px,#ff68c4 232px,#ff4994 255px,#ff2f6c 283px,#ff1a4d 317px,#ff0c37 350px,#ff0025 388px,#ff000c 468px,#ff0000 528px,#ff0000 544px)"></i><i style="left:37.4px;top:353.2px;width:546px;background:linear-gradient(90deg,#00baff 0px,#00a3ff 128px,#379eff 150px,#7298ff 171px,#b791ff 193px,#ff8aff 213px,#ff88fc 214px,#ff74dd 223px,#ff63c2 233px,#ff4593 256px,#ff2c6c 284px,#ff174c 319px,#ff0b38 349px,#ff0027 384px,#ff000d 465px,#ff0000 546px)"></i><i style="left:38.4px;top:355.2px;width:548px;background:linear-gradient(90deg,#00b6ff 0px,#009fff 126px,#369aff 148px,#7393ff 170px,#ae8dff 189px,#fe85ff 212px,#ff83fc 213px,#ff70de 222px,#ff5fc3 232px,#ff4294 255px,#ff2a6d 283px,#ff164d 318px,#ff002a 378px,#ff001c 415px,#ff0008 490px,#ff0000 548px)"></i><i style="left:39.4px;top:357.2px;width:545px;background:linear-gradient(90deg,#00b3ff 0px,#019bff 125px,#3a95ff 148px,#748fff 169px,#ae88ff 188px,#ff7efd 212px,#ff6cdf 221px,#ff5bc3 231px,#ff3f95 254px,#ff286e 282px,#ff144e 317px,#ff002d 372px,#ff001d 412px,#ff000a 481px,#ff0000 545px)"></i><i style="left:39.4px;top:359.2px;width:540px;background:linear-gradient(90deg,#00b0ff 0px,#0197ff 124px,#3891ff 147px,#748aff 169px,#b183ff 189px,#ff7afd 212px,#ff68df 221px,#ff58c4 231px,#ff3c95 254px,#ff256f 282px,#ff1350 315px,#ff0030 367px,#ff0020 406px,#ff000e 467px,#ff0000 540px)"></i><i style="left:40.4px;top:361.2px;width:533px;background:linear-gradient(90deg,#00acff 0px,#0093ff 122px,#378dff 145px,#7586ff 168px,#b27fff 188px,#ff75fe 211px,#ff64e0 220px,#ff54c5 230px,#ff3a98 252px,#ff2471 280px,#ff1252 313px,#ff0033 362px,#ff0022 402px,#ff0010 461px,#ff0001 533px)"></i><i style="left:40.4px;top:363.2px;width:528px;background:linear-gradient(90deg,#00a9ff 0px,#0090ff 121px,#3389ff 143px,#7382ff 167px,#b27aff 188px,#ff71fe 211px,#ff60e1 220px,#ff51c6 230px,#ff3899 252px,#ff2273 279px,#ff1053 312px,#ff0036 357px,#ff0023 400px,#ff0012 458px,#ff0003 528px)"></i><i style="left:41.4px;top:365.2px;width:521px;background:linear-gradient(90deg,#00a6ff 0px,#018cff 120px,#3a85ff 144px,#777dff 167px,#b575ff 188px,#ff6cfe 210px,#ff5ce1 219px,#ff4dc6 229px,#ff359a 251px,#ff2074 278px,#ff0f55 310px,#ff0039 352px,#ff0025 396px,#ff0013 453px,#ff0004 521px)"></i><i style="left:42.4px;top:367.2px;width:515px;background:linear-gradient(90deg,#00a2ff 0px,#0088ff 118px,#3b81ff 143px,#7879ff 166px,#b971ff 188px,#ff68ff 209px,#ff4bca 227px,#ff339c 249px,#ff1f76 276px,#ff0e57 308px,#ff003d 346px,#ff0027 393px,#ff0015 448px,#ff0006 515px)"></i><i style="left:42.4px;top:369.2px;width:509px;background:linear-gradient(90deg,#009fff 0px,#0085ff 117px,#377dff 141px,#7675ff 165px,#b96cff 188px,#ff63ff 209px,#ff48ca 227px,#ff309d 249px,#ff1d78 275px,#ff0d58 307px,#ff0040 341px,#ff0029 390px,#ff0017 444px,#ff0008 509px)"></i><i style="left:43.4px;top:371.2px;width:503px;background:linear-gradient(90deg,#009cff 0px,#0181ff 116px,#387aff 140px,#7472ff 163px,#ad6aff 183px,#fe5fff 208px,#ff5dfc 209px,#ff43c9 227px,#ff2d9c 249px,#ff1a78 275px,#ff0b59 306px,#ff0044 336px,#ff002a 387px,#ff0018 440px,#ff0009 503px)"></i><i style="left:44.4px;top:373.2px;width:496px;background:linear-gradient(90deg,#0099ff 0px,#007eff 114px,#3976ff 139px,#746eff 162px,#b065ff 183px,#ff59fd 208px,#ff40c9 226px,#ff2a9d 248px,#ff1878 274px,#ff095b 304px,#ff0048 330px,#ff002c 383px,#ff001a 435px,#ff000b 496px)"></i><i style="left:44.4px;top:375.2px;width:491px;background:linear-gradient(90deg,#0096ff 0px,#007aff 113px,#3872ff 138px,#756aff 162px,#b161ff 183px,#ff55fd 208px,#ff3dca 226px,#ff28a0 247px,#ff177c 272px,#ff095d 302px,#ff004b 326px,#ff002e 380px,#ff001c 431px,#ff000c 491px)"></i><i style="left:45.4px;top:377.2px;width:484px;background:linear-gradient(90deg,#0092ff 0px,#0077ff 111px,#356fff 135px,#7366ff 160px,#b15dff 182px,#ff51fe 207px,#ff3acb 225px,#ff26a0 246px,#ff157c 271px,#ff075f 300px,#ff004f 320px,#ff0030 376px,#ff001e 425px,#ff000e 484px)"></i><i style="left:45.4px;top:379.2px;width:479px;background:linear-gradient(90deg,#0090ff 0px,#0174ff 111px,#3b6bff 137px,#7762ff 161px,#b459ff 183px,#ff4dfe 207px,#ff37ce 224px,#ff24a3 245px,#ff147f 270px,#ff0661 299px,#ff0054 315px,#ff0032 374px,#ff001f 422px,#ff0010 479px)"></i><i style="left:46.4px;top:381.2px;width:472px;background:linear-gradient(90deg,#008cff 0px,#0071ff 109px,#3968ff 135px,#775eff 160px,#b755ff 183px,#ff4afe 206px,#ff34ce 223px,#ff21a4 244px,#ff1281 268px,#ff0562 297px,#ff0057 310px,#ff0049 331px,#ff0034 370px,#ff0021 417px,#ff0012 472px)"></i><i style="left:47.4px;top:383.2px;width:466px;background:linear-gradient(90deg,#0089ff 0px,#006eff 107px,#3665ff 132px,#755bff 158px,#b851ff 182px,#ff46ff 205px,#ff31cf 222px,#ff1fa4 243px,#ff1081 267px,#ff0364 295px,#ff004b 328px,#ff0035 367px,#ff0023 413px,#ff0014 466px)"></i><i style="left:48.4px;top:385.2px;width:459px;background:linear-gradient(90deg,#0086ff 0px,#016aff 106px,#3c61ff 133px,#7957ff 158px,#bb4dff 182px,#ff42ff 204px,#ff2ed0 221px,#ff1da7 241px,#ff0f85 264px,#ff0267 292px,#ff004d 324px,#ff0038 362px,#ff0025 407px,#ff0016 459px)"></i><i style="left:48.4px;top:387.2px;width:454px;background:linear-gradient(90deg,#0083ff 0px,#0067ff 105px,#3a5eff 132px,#7754ff 157px,#b84aff 181px,#fe3eff 204px,#ff2bd0 221px,#ff1ba8 241px,#ff0d85 264px,#ff0168 291px,#ff004f 323px,#ff003a 360px,#ff0027 403px,#ff0018 454px)"></i><i style="left:49.4px;top:389.2px;width:447px;background:linear-gradient(90deg,#0080ff 0px,#0064ff 103px,#375bff 129px,#7251ff 154px,#b047ff 177px,#ff39fd 204px,#ff27ce 221px,#ff18a8 240px,#ff0b86 263px,#ff006a 289px,#ff0051 320px,#ff003c 356px,#ff002a 398px,#ff001a 447px)"></i><i style="left:50.4px;top:391.2px;width:441px;background:linear-gradient(90deg,#007dff 0px,#0161ff 102px,#3a58ff 129px,#764eff 154px,#b044ff 176px,#ff36fd 203px,#ff24cf 220px,#ff16a9 239px,#ff0988 261px,#ff006c 287px,#ff0053 317px,#ff003e 352px,#ff002c 393px,#ff001c 441px)"></i><i style="left:50.4px;top:393.2px;width:435px;background:linear-gradient(90deg,#007bff 0px,#015eff 101px,#3955ff 128px,#764aff 154px,#b340ff 177px,#ff32fe 203px,#ff22d2 219px,#ff14ab 238px,#ff088a 260px,#ff006d 286px,#ff0055 316px,#ff0040 350px,#ff001e 435px)"></i><i style="left:51.4px;top:395.2px;width:428px;background:linear-gradient(90deg,#0078ff 0px,#005cff 99px,#3a51ff 127px,#7747ff 153px,#b63cff 177px,#ff2ffe 202px,#ff1fd3 218px,#ff11ac 237px,#ff068c 258px,#ff007c 272px,#ff0070 283px,#ff0058 312px,#ff0043 345px,#ff0021 428px)"></i><i style="left:52.4px;top:397.2px;width:422px;background:linear-gradient(90deg,#0075ff 0px,#0059ff 97px,#374fff 124px,#7544ff 151px,#b639ff 176px,#ff2bfe 201px,#ff1cd3 217px,#ff10af 235px,#ff0082 266px,#ff0072 281px,#ff005a 309px,#ff0044 342px,#ff0023 422px)"></i><i style="left:53.4px;top:399.2px;width:415px;background:linear-gradient(90deg,#0072ff 0px,#0156ff 96px,#3a4cff 124px,#7840ff 151px,#b935ff 176px,#ff28ff 200px,#ff1ad4 216px,#ff0daf 234px,#ff0089 260px,#ff0075 278px,#ff005d 305px,#ff0047 337px,#ff0025 415px)"></i><i style="left:53.4px;top:401.2px;width:410px;background:linear-gradient(90deg,#006fff 0px,#0053ff 95px,#3b49ff 124px,#793dff 151px,#b931ff 176px,#ff25ff 200px,#ff18d7 215px,#ff0bb2 233px,#ff008f 256px,#ff0076 277px,#ff005e 304px,#ff004a 334px,#ff0028 410px)"></i><i style="left:54.4px;top:403.2px;width:403px;background:linear-gradient(90deg,#006cff 0px,#0051ff 93px,#3846ff 121px,#773bff 149px,#ba2eff 175px,#ff21ff 199px,#ff14d5 215px,#ff09b2 232px,#ff0096 250px,#ff0079 274px,#ff0061 300px,#ff004c 330px,#ff002a 403px)"></i><i style="left:55.4px;top:405.2px;width:397px;background:linear-gradient(90deg,#0069ff 0px,#014eff 92px,#3943ff 120px,#7638ff 147px,#af2dff 170px,#ff1dfd 199px,#ff11d5 214px,#ff07b3 231px,#ff009d 245px,#ff007a 273px,#ff0063 298px,#ff004e 327px,#ff002d 397px)"></i><i style="left:56.4px;top:407.2px;width:390px;background:linear-gradient(90deg,#0067ff 0px,#014bff 90px,#3a40ff 119px,#7635ff 146px,#b229ff 170px,#ff1afd 198px,#ff0fd6 213px,#ff05b6 229px,#ff00a5 239px,#ff007d 270px,#ff0066 294px,#ff0052 322px,#ff0030 390px)"></i><i style="left:57.4px;top:409.2px;width:384px;background:linear-gradient(90deg,#0064ff 0px,#0049ff 88px,#393eff 117px,#7532ff 144px,#b226ff 169px,#ff17fd 197px,#ff0cd7 212px,#ff03b6 228px,#ff0098 247px,#ff007f 268px,#ff0068 292px,#ff0054 319px,#ff0032 384px)"></i><i style="left:57.4px;top:411.2px;width:378px;background:linear-gradient(90deg,#0061ff 0px,#0046ff 87px,#363cff 115px,#752fff 144px,#b523ff 170px,#ff14fe 197px,#ff0ad9 211px,#ff01b9 227px,#ff009c 245px,#ff0081 266px,#ff006b 289px,#ff0057 315px,#ff0035 378px)"></i><i style="left:58.4px;top:413.2px;width:372px;background:linear-gradient(90deg,#005fff 0px,#0144ff 86px,#3b38ff 116px,#782cff 144px,#b81fff 170px,#ff11fe 196px,#ff07da 210px,#ff00b9 226px,#ff009e 243px,#ff0084 263px,#ff006d 286px,#ff005a 311px,#ff0038 372px)"></i><i style="left:59.4px;top:415.2px;width:365px;background:linear-gradient(90deg,#005cff 0px,#0041ff 84px,#3a36ff 114px,#762aff 142px,#b81cff 169px,#ff0eff 195px,#ff05da 209px,#ff00bc 224px,#ff00a0 241px,#ff0086 261px,#ff005d 307px,#ff003b 365px)"></i><i style="left:60.4px;top:417.2px;width:359px;background:linear-gradient(90deg,#0059ff 0px,#003fff 82px,#3933ff 112px,#7727ff 141px,#b819ff 168px,#ff0bff 194px,#ff00d2 212px,#ff00be 222px,#ff00a2 239px,#ff0089 258px,#ff005f 303px,#ff003e 359px)"></i><i style="left:61.4px;top:419.2px;width:352px;background:linear-gradient(90deg,#0056ff 0px,#013cff 81px,#3a31ff 111px,#7824ff 140px,#b817ff 167px,#ff08ff 193px,#ff00de 206px,#ff00bf 221px,#ff00a4 237px,#ff008c 255px,#ff0063 298px,#ff0042 352px)"></i><i style="left:62.4px;top:421.2px;width:346px;background:linear-gradient(90deg,#0054ff 0px,#003aff 79px,#3b2eff 110px,#7821ff 139px,#b914ff 166px,#fe05ff 192px,#ff00e8 201px,#ff00bf 220px,#ff00a5 236px,#ff008e 253px,#ff0065 295px,#ff0045 346px)"></i><i style="left:62.4px;top:423.2px;width:340px;background:linear-gradient(90deg,#0051ff 0px,#0038ff 78px,#382cff 108px,#741fff 137px,#b113ff 163px,#ff02fd 193px,#ff00df 205px,#ff00c2 219px,#ff00a7 235px,#ff0090 252px,#ff0068 292px,#ff0049 340px)"></i><i style="left:63.4px;top:425.2px;width:334px;background:linear-gradient(90deg,#004fff 0px,#0136ff 77px,#392aff 107px,#751dff 136px,#b210ff 162px,#ff00fd 192px,#ff00df 204px,#ff00c2 218px,#ff0093 249px,#ff006c 287px,#ff004c 334px)"></i><i style="left:64.4px;top:427.2px;width:327px;background:linear-gradient(90deg,#004cff 0px,#0133ff 75px,#3a27ff 106px,#761aff 135px,#b40dff 162px,#ed00ff 184px,#ff00fe 191px,#ff00e0 203px,#ff00c5 216px,#ff0096 246px,#ff0070 283px,#ff0050 327px)"></i><i style="left:65.4px;top:429.2px;width:321px;background:linear-gradient(90deg,#004aff 0px,#0031ff 73px,#3925ff 104px,#7618ff 134px,#ab0cff 157px,#e200ff 179px,#ff00fe 190px,#ff00e2 201px,#ff00c7 214px,#ff009a 243px,#ff0074 278px,#ff0054 321px)"></i><i style="left:66.4px;top:431.2px;width:314px;background:linear-gradient(90deg,#0047ff 0px,#002fff 71px,#3823ff 102px,#7715ff 133px,#d500ff 173px,#ff00fe 189px,#ff00ca 212px,#ff009d 240px,#ff0077 274px,#ff0058 314px)"></i><i style="left:67.4px;top:433.2px;width:308px;background:linear-gradient(90deg,#0044ff 0px,#012dff 70px,#3b20ff 102px,#7812ff 132px,#cb00ff 168px,#ff00ff 188px,#ff00ca 211px,#ff009f 238px,#ff007b 270px,#ff005c 308px)"></i><i style="left:68.4px;top:435.2px;width:301px;background:linear-gradient(90deg,#0042ff 0px,#002bff 68px,#3a1eff 100px,#7810ff 131px,#bf00ff 162px,#ff00ff 187px,#ff00cd 209px,#ff00a2 235px,#ff007f 265px,#ff0061 301px)"></i><i style="left:69.4px;top:437.2px;width:295px;background:linear-gradient(90deg,#003fff 0px,#0029ff 66px,#3b1cff 99px,#790dff 130px,#b300ff 156px,#ff00ff 186px,#ff00cd 208px,#ff00a6 232px,#ff0083 261px,#ff0065 295px)"></i><i style="left:70.4px;top:439.2px;width:288px;background:linear-gradient(90deg,#003dff 0px,#0127ff 65px,#3b19ff 98px,#790bff 129px,#aa00ff 151px,#fe00ff 185px,#ff00d0 206px,#ff00a9 229px,#ff0088 256px,#ff006b 288px)"></i><i style="left:71.4px;top:441.2px;width:282px;background:linear-gradient(90deg,#003aff 0px,#0125ff 63px,#3b17ff 96px,#7809ff 127px,#9f00ff 145px,#fe00ff 184px,#ff00d2 204px,#ff00ad 226px,#ff008c 252px,#ff006f 282px)"></i><i style="left:72.4px;top:443.2px;width:275px;background:linear-gradient(90deg,#0038ff 0px,#0023ff 61px,#3a15ff 94px,#7807ff 126px,#9600ff 140px,#fe00ff 183px,#ff00d3 203px,#ff00b0 223px,#ff0091 247px,#ff0075 275px)"></i><i style="left:73.4px;top:445.2px;width:269px;background:linear-gradient(90deg,#0035ff 0px,#0121ff 60px,#3a13ff 93px,#7904ff 125px,#8c00ff 134px,#b800ff 154px,#fd00ff 182px,#ff00d3 202px,#ff00b2 221px,#ff0095 243px,#ff007a 269px)"></i><i style="left:74.4px;top:447.2px;width:262px;background:linear-gradient(90deg,#0033ff 0px,#011fff 58px,#3a11ff 91px,#7703ff 123px,#b900ff 153px,#fd00ff 181px,#ff00d6 200px,#ff00b6 218px,#ff0099 239px,#ff0080 262px)"></i><i style="left:75.4px;top:449.2px;width:256px;background:linear-gradient(90deg,#0031ff 0px,#001dff 56px,#3a0fff 90px,#7800ff 122px,#b900ff 152px,#ff00ff 181px,#ff00da 197px,#ff00bb 214px,#ff009f 234px,#ff0086 256px)"></i><i style="left:76.4px;top:451.2px;width:249px;background:linear-gradient(90deg,#002eff 0px,#001bff 54px,#390dff 88px,#7800ff 121px,#b900ff 151px,#ff00ff 180px,#ff00dd 195px,#ff00bf 211px,#ff00a4 229px,#ff008d 249px)"></i><i style="left:77.4px;top:453.2px;width:243px;background:linear-gradient(90deg,#002cff 0px,#0119ff 53px,#3a0bff 87px,#6700ff 111px,#7900ff 120px,#b900ff 150px,#ff00ff 179px,#ff00df 193px,#ff00c3 208px,#ff0093 243px)"></i><i style="left:78.4px;top:455.2px;width:236px;background:linear-gradient(90deg,#0029ff 0px,#0117ff 51px,#5e00ff 105px,#7700ff 118px,#b900ff 149px,#fe00ff 178px,#ff00c7 205px,#ff009a 236px)"></i><i style="left:79.4px;top:457.2px;width:229px;background:linear-gradient(90deg,#0027ff 0px,#0016ff 49px,#5700ff 100px,#7800ff 117px,#b900ff 148px,#fe00ff 177px,#ff00cb 202px,#ff00a2 229px)"></i><i style="left:80.4px;top:459.2px;width:223px;background:linear-gradient(90deg,#0025ff 0px,#0113ff 48px,#4f00ff 94px,#7900ff 116px,#b900ff 147px,#fe00ff 176px,#ff00cf 199px,#ff00a9 223px)"></i><i style="left:81.4px;top:461.2px;width:216px;background:linear-gradient(90deg,#0022ff 0px,#0112ff 46px,#4800ff 89px,#7700ff 114px,#b700ff 145px,#fd00ff 175px,#ff00d3 196px,#ff00b2 216px)"></i><i style="left:82.4px;top:463.2px;width:210px;background:linear-gradient(90deg,#0020ff 0px,#0010ff 44px,#4000ff 83px,#7800ff 113px,#b800ff 144px,#fd00ff 174px,#ff00d7 193px,#ff00ba 210px)"></i><i style="left:83.4px;top:465.2px;width:203px;background:linear-gradient(90deg,#001eff 0px,#000fff 42px,#3800ff 77px,#7600ff 111px,#b800ff 143px,#ff00ff 174px,#ff00e0 188px,#ff00c4 203px)"></i><i style="left:84.4px;top:467.2px;width:197px;background:linear-gradient(90deg,#001cff 0px,#010dff 41px,#3300ff 72px,#7900ff 111px,#ba00ff 143px,#ff00ff 173px,#ff00cd 197px)"></i><i style="left:85.4px;top:469.2px;width:190px;background:linear-gradient(90deg,#0019ff 0px,#010bff 39px,#2b00ff 66px,#7700ff 109px,#b800ff 141px,#ff00ff 172px,#ff00d9 190px)"></i><i style="left:86.4px;top:471.2px;width:184px;background:linear-gradient(90deg,#0017ff 0px,#0009ff 37px,#2500ff 61px,#7800ff 108px,#b800ff 140px,#fe00ff 171px,#ff00e3 184px)"></i><i style="left:88.4px;top:473.2px;width:176px;background:linear-gradient(90deg,#0015ff 0px,#0108ff 35px,#1e00ff 54px,#7800ff 106px,#b800ff 138px,#fe00ff 169px,#ff00f0 176px)"></i><i style="left:89.4px;top:475.2px;width:170px;background:linear-gradient(90deg,#0012ff 0px,#0006ff 32px,#0704ff 37px,#1700ff 48px,#7500ff 103px,#b600ff 136px,#fe00ff 168px,#ff00fb 170px)"></i><i style="left:90.4px;top:477.2px;width:163px;background:linear-gradient(90deg,#0010ff 0px,#0005ff 30px,#0902ff 37px,#3f00ff 71px,#7700ff 103px,#b500ff 134px,#f400ff 163px)"></i><i style="left:91.4px;top:479.2px;width:157px;background:linear-gradient(90deg,#000eff 0px,#0003ff 29px,#0701ff 34px,#3b00ff 67px,#7200ff 99px,#ac00ff 129px,#e900ff 157px)"></i><i style="left:93.4px;top:481.2px;width:149px;background:linear-gradient(90deg,#000bff 0px,#0002ff 26px,#0500ff 30px,#3700ff 62px,#6a00ff 92px,#a100ff 121px,#db00ff 149px)"></i><i style="left:94.4px;top:483.2px;width:143px;background:linear-gradient(90deg,#0009ff 0px,#0000ff 24px,#0300ff 27px,#6500ff 88px,#9900ff 116px,#d000ff 143px)"></i><i style="left:96.4px;top:485.2px;width:135px;background:linear-gradient(90deg,#0007ff 0px,#0000ff 22px,#0400ff 25px,#6100ff 83px,#c400ff 135px)"></i><i style="left:97.4px;top:487.2px;width:129px;background:linear-gradient(90deg,#0005ff 0px,#0000ff 20px,#0400ff 23px,#5a00ff 78px,#b900ff 129px)"></i><i style="left:99.4px;top:489.2px;width:121px;background:linear-gradient(90deg,#0002ff 0px,#0000ff 17px,#0500ff 21px,#5600ff 73px,#ae00ff 121px)"></i><i style="left:100.4px;top:491.2px;width:115px;background:linear-gradient(90deg,#0000ff 0px,#0000ff 16px,#0600ff 20px,#5100ff 69px,#a400ff 115px)"></i><i style="left:102.4px;top:493.2px;width:107px;background:linear-gradient(90deg,#0000ff 0px,#0000ff 13px,#0800ff 19px,#4f00ff 65px,#9900ff 107px)"></i><i style="left:104.4px;top:495.2px;width:100px;background:linear-gradient(90deg,#0000ff 0px,#0000ff 10px,#0f00ff 21px,#4e00ff 62px,#9000ff 100px)"></i><i style="left:106.4px;top:497.2px;width:92px;background:linear-gradient(90deg,#0000ff 0px,#0000ff 8px,#1600ff 23px,#4b00ff 58px,#8500ff 92px)"></i><i style="left:108.4px;top:499.2px;width:85px;background:linear-gradient(90deg,#0000ff 0px,#0000ff 5px,#1e00ff 26px,#7d00ff 85px)"></i><i style="left:110.4px;top:501.2px;width:77px;background:linear-gradient(90deg,#0000ff 0px,#0100ff 3px,#2900ff 31px,#7300ff 77px)"></i><i style="left:112.4px;top:503.2px;width:70px;background:linear-gradient(90deg,#0100ff 0px,#3400ff 36px,#6b00ff 70px)"></i><i style="left:115.4px;top:505.2px;width:61px;background:linear-gradient(90deg,#0600ff 0px,#6100ff 61px)"></i><i style="left:117.4px;top:507.2px;width:54px;background:linear-gradient(90deg,#0900ff 0px,#5a00ff 54px)"></i><i style="left:120.4px;top:509.2px;width:45px;background:linear-gradient(90deg,#0e00ff 0px,#5100ff 45px)"></i><i style="left:123.4px;top:511.2px;width:37px;background:linear-gradient(90deg,#1300ff 0px,#4a00ff 37px)"></i><i style="left:126.4px;top:513.2px;width:28px;background:linear-gradient(90deg,#1800ff 0px,#4100ff 28px)"></i><i style="left:129.4px;top:515.2px;width:20px;background:linear-gradient(90deg,#1e00ff 0px,#3a00ff 20px)"></i><i style="left:132.4px;top:517.2px;width:11px;background:linear-gradient(90deg,#2300ff 0px,#3200ff 11px)"></i></div></div><div style="position:absolute;left:1512.8px;top:66px;width:194.20000000000005px;height:194.60000000000002px;background:#333333"></div><div id="ins"><i style="top:0px;background:linear-gradient(90deg,#b0ff00 0px,#ffff00 152px,#ffec00 188px)"></i><i style="top:3px;background:linear-gradient(90deg,#b1ff00 0px,#feff00 148px,#ffeb00 188px)"></i><i style="top:6px;background:linear-gradient(90deg,#b2ff00 0px,#ffff00 148px,#ffea00 188px)"></i><i style="top:9px;background:linear-gradient(90deg,#b2ff00 0px,#feff00 144px,#ffe900 188px)"></i><i style="top:12px;background:linear-gradient(90deg,#b3ff00 0px,#ffff00 144px,#ffe800 188px)"></i><i style="top:15px;background:linear-gradient(90deg,#b4ff00 0px,#feff00 140px,#ffe700 188px)"></i><i style="top:18px;background:linear-gradient(90deg,#b5ff00 0px,#ffff00 140px,#ffe600 188px)"></i><i style="top:21px;background:linear-gradient(90deg,#b6ff01 0px,#fffe00 140px,#ffe600 188px)"></i><i style="top:24px;background:linear-gradient(90deg,#b6ff01 0px,#feff00 136px,#ffe500 188px)"></i><i style="top:27px;background:linear-gradient(90deg,#b7ff01 0px,#ffff00 136px,#ffe400 188px)"></i><i style="top:30px;background:linear-gradient(90deg,#b8ff02 0px,#feff00 132px,#ffe300 188px)"></i><i style="top:33px;background:linear-gradient(90deg,#b9ff02 0px,#ffff00 132px,#ffe200 188px)"></i><i style="top:36px;background:linear-gradient(90deg,#baff03 0px,#c6ff00 24px,#feff00 128px,#ffe100 188px)"></i><i style="top:39px;background:linear-gradient(90deg,#baff03 0px,#c9ff00 28px,#ffff00 128px,#ffe000 188px)"></i><i style="top:42px;background:linear-gradient(90deg,#bbff04 0px,#ccff00 32px,#feff00 124px,#ffdf00 188px)"></i><i style="top:45px;background:linear-gradient(90deg,#bcff04 0px,#cfff00 36px,#ffff00 124px,#ffde00 188px)"></i><i style="top:48px;background:linear-gradient(90deg,#bdff04 0px,#d2ff00 40px,#fffe00 124px,#ffdd00 188px)"></i><i style="top:51px;background:linear-gradient(90deg,#beff05 0px,#d5ff00 44px,#ffff00 120px,#ffdd00 188px)"></i><i style="top:54px;background:linear-gradient(90deg,#beff05 0px,#d8ff00 48px,#fffe00 120px,#ffdc00 188px)"></i><i style="top:57px;background:linear-gradient(90deg,#bfff06 0px,#dbff00 52px,#feff00 116px,#ffdb00 188px)"></i><i style="top:60px;background:linear-gradient(90deg,#c0ff06 0px,#dcff00 52px,#ffff00 116px,#ffda00 188px)"></i><i style="top:63px;background:linear-gradient(90deg,#c1ff07 0px,#dfff00 56px,#feff00 112px,#ffd900 188px)"></i><i style="top:66px;background:linear-gradient(90deg,#c2ff07 0px,#e2ff00 60px,#ffff00 112px,#ffd800 188px)"></i><i style="top:69px;background:linear-gradient(90deg,#c3ff08 0px,#e5ff00 64px,#feff00 108px,#ffd700 188px)"></i><i style="top:72px;background:linear-gradient(90deg,#c3ff08 0px,#e8ff00 68px,#ffff00 108px,#ffd600 188px)"></i><i style="top:75px;background:linear-gradient(90deg,#c4ff08 0px,#ebff00 72px,#fffe00 108px,#ffd600 188px)"></i><i style="top:78px;background:linear-gradient(90deg,#c5ff09 0px,#efff00 76px,#ffff00 104px,#ffd500 188px)"></i><i style="top:81px;background:linear-gradient(90deg,#c6ff09 0px,#f2ff00 80px,#fffe00 104px,#ffd400 188px)"></i><i style="top:84px;background:linear-gradient(90deg,#c7ff0a 0px,#ffff00 100px,#ffd300 188px)"></i><i style="top:87px;background:linear-gradient(90deg,#c8ff0a 0px,#fffe00 100px,#ffd200 188px)"></i><i style="top:90px;background:linear-gradient(90deg,#c9ff0b 0px,#feff00 96px,#ffd100 188px)"></i><i style="top:93px;background:linear-gradient(90deg,#caff0b 0px,#ffff00 96px,#ffd000 188px)"></i><i style="top:96px;background:linear-gradient(90deg,#caff0c 0px,#feff01 92px,#ffd000 188px)"></i><i style="top:99px;background:linear-gradient(90deg,#cbff0c 0px,#ffff01 92px,#ffcf00 188px)"></i><i style="top:102px;background:linear-gradient(90deg,#ccff0d 0px,#fffe02 92px,#ffce00 188px)"></i><i style="top:105px;background:linear-gradient(90deg,#cdff0d 0px,#ffff03 88px,#fff100 112px,#ffcd00 188px)"></i><i style="top:108px;background:linear-gradient(90deg,#ceff0e 0px,#fffe03 88px,#ffee00 116px,#ffcc00 188px)"></i><i style="top:111px;background:linear-gradient(90deg,#cfff0e 0px,#ffff04 84px,#ffeb00 120px,#ffcb00 188px)"></i><i style="top:114px;background:linear-gradient(90deg,#d0ff0f 0px,#fffe05 84px,#ffe800 124px,#ffcb00 188px)"></i><i style="top:117px;background:linear-gradient(90deg,#d1ff0f 0px,#feff06 80px,#ffe700 124px,#ffca00 188px)"></i><i style="top:120px;background:linear-gradient(90deg,#d2ff10 0px,#fffe06 80px,#ffe400 128px,#ffc900 188px)"></i><i style="top:123px;background:linear-gradient(90deg,#d3ff10 0px,#feff07 76px,#ffe100 132px,#ffc800 188px)"></i><i style="top:126px;background:linear-gradient(90deg,#d3ff11 0px,#ffff08 76px,#ffde00 136px,#ffc700 188px)"></i><i style="top:129px;background:linear-gradient(90deg,#d4ff11 0px,#fffe08 76px,#ffdc00 140px,#ffc600 188px)"></i><i style="top:132px;background:linear-gradient(90deg,#d5ff12 0px,#ffff09 72px,#ffd900 144px,#ffc600 188px)"></i><i style="top:135px;background:linear-gradient(90deg,#d6ff12 0px,#fffe0a 72px,#ffd600 148px,#ffc500 188px)"></i><i style="top:138px;background:linear-gradient(90deg,#d7ff13 0px,#ffff0b 68px,#ffd300 152px,#ffc400 188px)"></i><i style="top:141px;background:linear-gradient(90deg,#d8ff13 0px,#fffe0b 68px,#ffd100 156px,#ffc300 188px)"></i><i style="top:144px;background:linear-gradient(90deg,#d9ff14 0px,#ffff0c 64px,#ffdf04 124px,#ffc200 188px)"></i><i style="top:147px;background:linear-gradient(90deg,#daff14 0px,#fffe0d 64px,#ffde04 124px,#ffc100 188px)"></i><i style="top:150px;background:linear-gradient(90deg,#dbff15 0px,#feff0e 60px,#ffdd05 124px,#ffc100 188px)"></i><i style="top:153px;background:linear-gradient(90deg,#dcff15 0px,#fffe0e 60px,#ffde06 120px,#ffc000 188px)"></i><i style="top:156px;background:linear-gradient(90deg,#ddff16 0px,#fffd0f 60px,#ffdd06 120px,#ffbf00 188px)"></i><i style="top:159px;background:linear-gradient(90deg,#deff16 0px,#ffff10 56px,#ffdc07 120px,#ffbe00 188px)"></i><i style="top:162px;background:linear-gradient(90deg,#dfff17 0px,#fffe10 56px,#ffdb07 120px,#ffbd00 188px)"></i><i style="top:165px;background:linear-gradient(90deg,#e0ff17 0px,#ffff11 52px,#ffdc08 116px,#ffbd00 188px)"></i><i style="top:168px;background:linear-gradient(90deg,#e1ff18 0px,#fffe12 52px,#ffdb08 116px,#ffbc00 188px)"></i><i style="top:171px;background:linear-gradient(90deg,#e2ff18 0px,#ffff13 48px,#ffda09 116px,#ffbb01 188px)"></i><i style="top:174px;background:linear-gradient(90deg,#e3ff19 0px,#fffe13 48px,#ffdb0a 112px,#ffba01 188px)"></i><i style="top:177px;background:linear-gradient(90deg,#e4ff1a 0px,#ffff14 44px,#ffda0a 112px,#ffb901 188px)"></i><i style="top:180px;background:linear-gradient(90deg,#e5ff1a 0px,#fffe15 44px,#ffd90b 112px,#ffb902 188px)"></i><i style="top:183px;background:linear-gradient(90deg,#e6ff1b 0px,#fffd15 44px,#ffd80b 112px,#ffb802 188px)"></i><i style="top:186px;background:linear-gradient(90deg,#e7ff1b 0px,#fffe17 40px,#ffd90c 108px,#ffb702 188px)"></i></div>
<svg id="ov" width="1716" height="884" viewBox="0 0 1716 884">
<defs><linearGradient id="g1" x1="0" y1="0" x2="0" y2="1"><stop offset="0" stop-color="#ff3030"/><stop offset="0.35" stop-color="#f00000"/><stop offset="1" stop-color="#c80000"/></linearGradient><linearGradient id="g2" x1="0" y1="0" x2="0" y2="1"><stop offset="0" stop-color="#5caf5c"/><stop offset="0.22" stop-color="#008400"/><stop offset="0.5" stop-color="#008000"/><stop offset="1" stop-color="#003200"/></linearGradient><linearGradient id="g3" x1="0" y1="0" x2="0" y2="1"><stop offset="0" stop-color="#6060ff"/><stop offset="0.3" stop-color="#0000ff"/><stop offset="0.55" stop-color="#0000f0"/><stop offset="1" stop-color="#000064"/></linearGradient><linearGradient id="g4" x1="0" y1="0" x2="0" y2="1"><stop offset="0" stop-color="#d2d225"/><stop offset="0.2" stop-color="#c8c800"/><stop offset="0.5" stop-color="#c4c400"/><stop offset="1" stop-color="#565600"/></linearGradient><linearGradient id="g5" x1="0" y1="0" x2="0" y2="1"><stop offset="0" stop-color="#d2d225"/><stop offset="0.2" stop-color="#c8c800"/><stop offset="0.5" stop-color="#c4c400"/><stop offset="1" stop-color="#565600"/></linearGradient><linearGradient id="g6" x1="0" y1="0" x2="0" y2="1"><stop offset="0" stop-color="#d2d225"/><stop offset="0.2" stop-color="#c8c800"/><stop offset="0.5" stop-color="#c4c400"/><stop offset="1" stop-color="#565600"/></linearGradient><linearGradient id="g7" x1="0" y1="0" x2="0" y2="1"><stop offset="0" stop-color="#d3b5b5"/><stop offset="0.2" stop-color="#c09696"/><stop offset="0.55" stop-color="#ad8787"/><stop offset="1" stop-color="#493939"/></linearGradient><linearGradient id="g8" x1="0" y1="0" x2="0" y2="1"><stop offset="0" stop-color="#b5d3b5"/><stop offset="0.2" stop-color="#96c096"/><stop offset="0.55" stop-color="#87ad87"/><stop offset="1" stop-color="#394939"/></linearGradient><linearGradient id="g9" x1="0" y1="0" x2="0" y2="1"><stop offset="0" stop-color="#b0b0cc"/><stop offset="0.2" stop-color="#8e8eb6"/><stop offset="0.55" stop-color="#8080a4"/><stop offset="1" stop-color="#363645"/></linearGradient><linearGradient id="g10" x1="0" y1="0" x2="0" y2="1"><stop offset="0" stop-color="#b5d3d3"/><stop offset="0.2" stop-color="#96c0c0"/><stop offset="0.55" stop-color="#87adad"/><stop offset="1" stop-color="#394949"/></linearGradient><linearGradient id="g11" x1="0" y1="0" x2="0" y2="1"><stop offset="0" stop-color="#d3b5d3"/><stop offset="0.2" stop-color="#c096c0"/><stop offset="0.55" stop-color="#ad87ad"/><stop offset="1" stop-color="#493949"/></linearGradient><linearGradient id="g12" x1="0" y1="0" x2="0" y2="1"><stop offset="0" stop-color="#d3d3b5"/><stop offset="0.2" stop-color="#c0c096"/><stop offset="0.55" stop-color="#adad87"/><stop offset="1" stop-color="#494939"/></linearGradient><linearGradient id="g13" x1="0" y1="0" x2="0" y2="1"><stop offset="0" stop-color="#d3a5a5"/><stop offset="0.2" stop-color="#c07f7f"/><stop offset="0.55" stop-color="#ad7272"/><stop offset="1" stop-color="#493030"/></linearGradient><linearGradient id="g14" x1="0" y1="0" x2="0" y2="1"><stop offset="0" stop-color="#a5d3a5"/><stop offset="0.2" stop-color="#7fc07f"/><stop offset="0.55" stop-color="#72ad72"/><stop offset="1" stop-color="#304930"/></linearGradient><linearGradient id="g15" x1="0" y1="0" x2="0" y2="1"><stop offset="0" stop-color="#a1a1cc"/><stop offset="0.2" stop-color="#7878b6"/><stop offset="0.55" stop-color="#6c6ca4"/><stop offset="1" stop-color="#2e2e45"/></linearGradient><linearGradient id="g16" x1="0" y1="0" x2="0" y2="1"><stop offset="0" stop-color="#a5d3d3"/><stop offset="0.2" stop-color="#7fc0c0"/><stop offset="0.55" stop-color="#72adad"/><stop offset="1" stop-color="#304949"/></linearGradient><linearGradient id="g17" x1="0" y1="0" x2="0" y2="1"><stop offset="0" stop-color="#d3a5d3"/><stop offset="0.2" stop-color="#c07fc0"/><stop offset="0.55" stop-color="#ad72ad"/><stop offset="1" stop-color="#493049"/></linearGradient><linearGradient id="g18" x1="0" y1="0" x2="0" y2="1"><stop offset="0" stop-color="#d3d3a5"/><stop offset="0.2" stop-color="#c0c07f"/><stop offset="0.55" stop-color="#adad72"/><stop offset="1" stop-color="#494930"/></linearGradient><linearGradient id="g19" x1="0" y1="0" x2="0" y2="1"><stop offset="0" stop-color="#d39898"/><stop offset="0.2" stop-color="#c06c6c"/><stop offset="0.55" stop-color="#ad6161"/><stop offset="1" stop-color="#492929"/></linearGradient><linearGradient id="g20" x1="0" y1="0" x2="0" y2="1"><stop offset="0" stop-color="#98d398"/><stop offset="0.2" stop-color="#6cc06c"/><stop offset="0.55" stop-color="#61ad61"/><stop offset="1" stop-color="#294929"/></linearGradient><linearGradient id="g21" x1="0" y1="0" x2="0" y2="1"><stop offset="0" stop-color="#9494cc"/><stop offset="0.2" stop-color="#6666b6"/><stop offset="0.55" stop-color="#5c5ca4"/><stop offset="1" stop-color="#272745"/></linearGradient><linearGradient id="g22" x1="0" y1="0" x2="0" y2="1"><stop offset="0" stop-color="#98d3d3"/><stop offset="0.2" stop-color="#6cc0c0"/><stop offset="0.55" stop-color="#61adad"/><stop offset="1" stop-color="#294949"/></linearGradient><linearGradient id="g23" x1="0" y1="0" x2="0" y2="1"><stop offset="0" stop-color="#d398d3"/><stop offset="0.2" stop-color="#c06cc0"/><stop offset="0.55" stop-color="#ad61ad"/><stop offset="1" stop-color="#492949"/></linearGradient><linearGradient id="g24" x1="0" y1="0" x2="0" y2="1"><stop offset="0" stop-color="#d3d398"/><stop offset="0.2" stop-color="#c0c06c"/><stop offset="0.55" stop-color="#adad61"/><stop offset="1" stop-color="#494929"/></linearGradient><linearGradient id="g25" x1="0" y1="0" x2="0" y2="1"><stop offset="0" stop-color="#d38282"/><stop offset="0.2" stop-color="#c04d4d"/><stop offset="0.55" stop-color="#ad4545"/><stop offset="1" stop-color="#491d1d"/></linearGradient><linearGradient id="g26" x1="0" y1="0" x2="0" y2="1"><stop offset="0" stop-color="#82d382"/><stop offset="0.2" stop-color="#4dc04d"/><stop offset="0.55" stop-color="#45ad45"/><stop offset="1" stop-color="#1d491d"/></linearGradient><linearGradient id="g27" x1="0" y1="0" x2="0" y2="1"><stop offset="0" stop-color="#8080cc"/><stop offset="0.2" stop-color="#4949b6"/><stop offset="0.55" stop-color="#4242a4"/><stop offset="1" stop-color="#1c1c45"/></linearGradient><linearGradient id="g28" x1="0" y1="0" x2="0" y2="1"><stop offset="0" stop-color="#82d3d3"/><stop offset="0.2" stop-color="#4dc0c0"/><stop offset="0.55" stop-color="#45adad"/><stop offset="1" stop-color="#1d4949"/></linearGradient><linearGradient id="g29" x1="0" y1="0" x2="0" y2="1"><stop offset="0" stop-color="#d382d3"/><stop offset="0.2" stop-color="#c04dc0"/><stop offset="0.55" stop-color="#ad45ad"/><stop offset="1" stop-color="#491d49"/></linearGradient><linearGradient id="g30" x1="0" y1="0" x2="0" y2="1"><stop offset="0" stop-color="#d3d382"/><stop offset="0.2" stop-color="#c0c04d"/><stop offset="0.55" stop-color="#adad45"/><stop offset="1" stop-color="#49491d"/></linearGradient><linearGradient id="g31" x1="0" y1="0" x2="0" y2="1"><stop offset="0" stop-color="#d35555"/><stop offset="0.2" stop-color="#c00c0c"/><stop offset="0.55" stop-color="#ad0a0a"/><stop offset="1" stop-color="#490404"/></linearGradient><linearGradient id="g32" x1="0" y1="0" x2="0" y2="1"><stop offset="0" stop-color="#55d355"/><stop offset="0.2" stop-color="#0cc00c"/><stop offset="0.55" stop-color="#0aad0a"/><stop offset="1" stop-color="#044904"/></linearGradient><linearGradient id="g33" x1="0" y1="0" x2="0" y2="1"><stop offset="0" stop-color="#5454cc"/><stop offset="0.2" stop-color="#0b0bb6"/><stop offset="0.55" stop-color="#0a0aa4"/><stop offset="1" stop-color="#040445"/></linearGradient><linearGradient id="g34" x1="0" y1="0" x2="0" y2="1"><stop offset="0" stop-color="#55d3d3"/><stop offset="0.2" stop-color="#0cc0c0"/><stop offset="0.55" stop-color="#0aadad"/><stop offset="1" stop-color="#044949"/></linearGradient><linearGradient id="g35" x1="0" y1="0" x2="0" y2="1"><stop offset="0" stop-color="#d355d3"/><stop offset="0.2" stop-color="#c00cc0"/><stop offset="0.55" stop-color="#ad0aad"/><stop offset="1" stop-color="#490449"/></linearGradient><linearGradient id="g36" x1="0" y1="0" x2="0" y2="1"><stop offset="0" stop-color="#d3d355"/><stop offset="0.2" stop-color="#c0c00c"/><stop offset="0.55" stop-color="#adad0a"/><stop offset="1" stop-color="#494904"/></linearGradient><linearGradient id="g37" x1="0" y1="0" x2="0" y2="1"><stop offset="0" stop-color="#ffffff"/><stop offset="0.5" stop-color="#e8e8e8"/><stop offset="1" stop-color="#8a8a8a"/></linearGradient><linearGradient id="g38" x1="0" y1="0" x2="0" y2="1"><stop offset="0" stop-color="#2b2b2b"/><stop offset="0.48" stop-color="#373737"/><stop offset="0.5" stop-color="#1e1e1e"/><stop offset="1" stop-color="#0e0e0e"/></linearGradient><linearGradient id="g39" x1="0" y1="0" x2="0" y2="1"><stop offset="0" stop-color="#2e2e2e"/><stop offset="1" stop-color="#262626"/></linearGradient><linearGradient id="g40" x1="0" y1="0" x2="0" y2="1"><stop offset="0" stop-color="#2e2e2e"/><stop offset="1" stop-color="#262626"/></linearGradient><linearGradient id="g41" x1="0" y1="0" x2="0" y2="1"><stop offset="0" stop-color="#2e2e2e"/><stop offset="1" stop-color="#262626"/></linearGradient><linearGradient id="g42" x1="0" y1="0" x2="0" y2="1"><stop offset="0" stop-color="#2e2e2e"/><stop offset="1" stop-color="#262626"/></linearGradient><linearGradient id="g43" x1="0" y1="0" x2="0" y2="1"><stop offset="0" stop-color="#2e2e2e"/><stop offset="1" stop-color="#262626"/></linearGradient><linearGradient id="g44" x1="0" y1="0" x2="0" y2="1"><stop offset="0" stop-color="#2e2e2e"/><stop offset="1" stop-color="#262626"/></linearGradient></defs>
<text x="21.3" y="82" font-size="40.3" textLength="337" lengthAdjust="spacingAndGlyphs" fill="#e6e6e6">Saturation Sweeps</text>
<text x="12" y="673.2" font-size="29.8" textLength="227" lengthAdjust="spacingAndGlyphs" fill="#e6e6e6">Current Reading</text>
<text x="12.5" y="715.7" font-size="24.3" textLength="105.5" lengthAdjust="spacingAndGlyphs" fill="#e6e6e6">x: 0,4385</text>
<text x="12.5" y="757.3" font-size="24.3" textLength="106" lengthAdjust="spacingAndGlyphs" fill="#e6e6e6">y: 0,4997</text>
<text x="12.5" y="799.6" font-size="24.3" textLength="85" lengthAdjust="spacingAndGlyphs" fill="#e6e6e6">fL: 27,2</text>
<text x="12.5" y="842.1" font-size="24.3" textLength="164.5" lengthAdjust="spacingAndGlyphs" fill="#e6e6e6">cd/m²: 93,194</text>
<rect x="45.70" y="154.60" width="261.30" height="458.10" fill="#242424"/>
<line x1="45.70" y1="193.37" x2="307.00" y2="193.37" stroke="#8a8a8a" stroke-width="1.3"/>
<line x1="45.70" y1="231.55" x2="307.00" y2="231.55" stroke="#8a8a8a" stroke-width="1.3"/>
<line x1="45.70" y1="269.73" x2="307.00" y2="269.73" stroke="#8a8a8a" stroke-width="1.3"/>
<line x1="45.70" y1="307.90" x2="307.00" y2="307.90" stroke="#8a8a8a" stroke-width="1.3"/>
<line x1="45.70" y1="346.07" x2="307.00" y2="346.07" stroke="#8a8a8a" stroke-width="1.3"/>
<line x1="45.70" y1="384.25" x2="307.00" y2="384.25" stroke="#8a8a8a" stroke-width="1.3"/>
<line x1="45.70" y1="422.43" x2="307.00" y2="422.43" stroke="#8a8a8a" stroke-width="1.3"/>
<line x1="45.70" y1="460.60" x2="307.00" y2="460.60" stroke="#8a8a8a" stroke-width="1.3"/>
<line x1="45.70" y1="498.77" x2="307.00" y2="498.77" stroke="#8a8a8a" stroke-width="1.3"/>
<line x1="45.70" y1="536.95" x2="307.00" y2="536.95" stroke="#8a8a8a" stroke-width="1.3"/>
<line x1="45.70" y1="575.12" x2="307.00" y2="575.12" stroke="#8a8a8a" stroke-width="1.3"/>
<line x1="45.20" y1="154.60" x2="307.50" y2="154.60" stroke="#8a8a8a" stroke-width="2.5"/>
<line x1="45.70" y1="154.60" x2="45.70" y2="612.70" stroke="#8a8a8a" stroke-width="1.3"/>
<line x1="307.00" y1="154.60" x2="307.00" y2="612.70" stroke="#8a8a8a" stroke-width="1.3"/>
<line x1="45.70" y1="612.70" x2="307.00" y2="612.70" stroke="#8a8a8a" stroke-width="1.6"/>
<line x1="39.70" y1="154.80" x2="45.70" y2="154.80" stroke="#d8d8d8" stroke-width="1.6"/>
<text x="39.900000000000006" y="159.89839999999995" font-size="14.8" text-anchor="end" fill="#e6e6e6">30</text>
<line x1="39.70" y1="193.37" x2="45.70" y2="193.37" stroke="#d8d8d8" stroke-width="1.6"/>
<text x="39.900000000000006" y="198.47339999999994" font-size="14.8" text-anchor="end" fill="#e6e6e6">25</text>
<line x1="39.70" y1="231.55" x2="45.70" y2="231.55" stroke="#d8d8d8" stroke-width="1.6"/>
<text x="39.900000000000006" y="236.64839999999995" font-size="14.8" text-anchor="end" fill="#e6e6e6">20</text>
<line x1="39.70" y1="269.73" x2="45.70" y2="269.73" stroke="#d8d8d8" stroke-width="1.6"/>
<text x="39.900000000000006" y="274.82340000000005" font-size="14.8" text-anchor="end" fill="#e6e6e6">15</text>
<line x1="39.70" y1="307.90" x2="45.70" y2="307.90" stroke="#d8d8d8" stroke-width="1.6"/>
<text x="39.900000000000006" y="312.9984" font-size="14.8" text-anchor="end" fill="#e6e6e6">10</text>
<line x1="39.70" y1="346.07" x2="45.70" y2="346.07" stroke="#d8d8d8" stroke-width="1.6"/>
<text x="39.900000000000006" y="351.1734" font-size="14.8" text-anchor="end" fill="#e6e6e6">5</text>
<line x1="39.70" y1="384.25" x2="45.70" y2="384.25" stroke="#d8d8d8" stroke-width="1.6"/>
<text x="39.900000000000006" y="389.3484" font-size="14.8" text-anchor="end" fill="#e6e6e6">0</text>
<line x1="39.70" y1="422.43" x2="45.70" y2="422.43" stroke="#d8d8d8" stroke-width="1.6"/>
<text x="39.900000000000006" y="427.52340000000004" font-size="14.8" text-anchor="end" fill="#e6e6e6">-5</text>
<line x1="39.70" y1="460.60" x2="45.70" y2="460.60" stroke="#d8d8d8" stroke-width="1.6"/>
<text x="39.900000000000006" y="465.69840000000005" font-size="14.8" text-anchor="end" fill="#e6e6e6">-10</text>
<line x1="39.70" y1="498.77" x2="45.70" y2="498.77" stroke="#d8d8d8" stroke-width="1.6"/>
<text x="39.900000000000006" y="503.8734" font-size="14.8" text-anchor="end" fill="#e6e6e6">-15</text>
<line x1="39.70" y1="536.95" x2="45.70" y2="536.95" stroke="#d8d8d8" stroke-width="1.6"/>
<text x="39.900000000000006" y="542.0484" font-size="14.8" text-anchor="end" fill="#e6e6e6">-20</text>
<line x1="39.70" y1="575.12" x2="45.70" y2="575.12" stroke="#d8d8d8" stroke-width="1.6"/>
<text x="39.900000000000006" y="580.2234" font-size="14.8" text-anchor="end" fill="#e6e6e6">-25</text>
<line x1="39.70" y1="612.90" x2="45.70" y2="612.90" stroke="#d8d8d8" stroke-width="1.6"/>
<text x="39.900000000000006" y="617.9984000000001" font-size="14.8" text-anchor="end" fill="#e6e6e6">-30</text>
<line x1="45.70" y1="612.70" x2="45.70" y2="619.00" stroke="#d8d8d8" stroke-width="1.7"/>
<line x1="307.00" y1="612.70" x2="307.00" y2="619.00" stroke="#d8d8d8" stroke-width="1.7"/>
<text x="163" y="147.7" font-size="15.8" text-anchor="middle" textLength="85" lengthAdjust="spacingAndGlyphs" fill="#e6e6e6">RGB Balance</text>
<text x="176.5" y="629.9" font-size="15" text-anchor="middle" textLength="37" lengthAdjust="spacingAndGlyphs" fill="#e6e6e6">100%</text>
<rect x="73.00" y="373.60" width="68.70" height="9.60" fill="url(#g1)" stroke="#000" stroke-width="1.2"/>
<rect x="142.80" y="384.20" width="69.00" height="120.10" fill="url(#g2)" stroke="#000" stroke-width="1.2"/>
<rect x="212.60" y="384.20" width="69.00" height="214.10" fill="url(#g3)" stroke="#000" stroke-width="1.2"/>
<rect x="410.70" y="69.80" width="141.80" height="276.90" fill="#242424"/>
<line x1="410.70" y1="117.00" x2="552.50" y2="117.00" stroke="#8a8a8a" stroke-width="1.3"/>
<line x1="410.70" y1="163.15" x2="552.50" y2="163.15" stroke="#8a8a8a" stroke-width="1.3"/>
<line x1="410.70" y1="209.30" x2="552.50" y2="209.30" stroke="#8a8a8a" stroke-width="1.3"/>
<line x1="410.70" y1="255.45" x2="552.50" y2="255.45" stroke="#8a8a8a" stroke-width="1.3"/>
<line x1="410.70" y1="301.60" x2="552.50" y2="301.60" stroke="#8a8a8a" stroke-width="1.3"/>
<line x1="410.20" y1="69.80" x2="553.00" y2="69.80" stroke="#8a8a8a" stroke-width="2.5"/>
<line x1="410.70" y1="69.80" x2="410.70" y2="346.70" stroke="#8a8a8a" stroke-width="1.3"/>
<line x1="552.50" y1="69.80" x2="552.50" y2="346.70" stroke="#8a8a8a" stroke-width="1.3"/>
<line x1="410.70" y1="346.70" x2="552.50" y2="346.70" stroke="#8a8a8a" stroke-width="1.6"/>
<line x1="404.70" y1="69.75" x2="410.70" y2="69.75" stroke="#d8d8d8" stroke-width="1.6"/>
<text x="404.4" y="74.84839999999998" font-size="14.8" text-anchor="end" fill="#e6e6e6">15</text>
<line x1="404.70" y1="117.00" x2="410.70" y2="117.00" stroke="#d8d8d8" stroke-width="1.6"/>
<text x="404.4" y="122.09839999999998" font-size="14.8" text-anchor="end" fill="#e6e6e6">10</text>
<line x1="404.70" y1="163.15" x2="410.70" y2="163.15" stroke="#d8d8d8" stroke-width="1.6"/>
<text x="404.4" y="168.2484" font-size="14.8" text-anchor="end" fill="#e6e6e6">5</text>
<line x1="404.70" y1="209.30" x2="410.70" y2="209.30" stroke="#d8d8d8" stroke-width="1.6"/>
<text x="404.4" y="214.3984" font-size="14.8" text-anchor="end" fill="#e6e6e6">0</text>
<line x1="404.70" y1="255.45" x2="410.70" y2="255.45" stroke="#d8d8d8" stroke-width="1.6"/>
<text x="404.4" y="260.5484" font-size="14.8" text-anchor="end" fill="#e6e6e6">-5</text>
<line x1="404.70" y1="301.60" x2="410.70" y2="301.60" stroke="#d8d8d8" stroke-width="1.6"/>
<text x="404.4" y="306.69840000000005" font-size="14.8" text-anchor="end" fill="#e6e6e6">-10</text>
<line x1="404.70" y1="346.65" x2="410.70" y2="346.65" stroke="#d8d8d8" stroke-width="1.6"/>
<text x="404.4" y="351.74840000000006" font-size="14.8" text-anchor="end" fill="#e6e6e6">-15</text>
<line x1="410.70" y1="346.70" x2="410.70" y2="353.00" stroke="#d8d8d8" stroke-width="1.7"/>
<line x1="552.50" y1="346.70" x2="552.50" y2="353.00" stroke="#d8d8d8" stroke-width="1.7"/>
<text x="468" y="64" font-size="15.8" text-anchor="middle" textLength="42.5" lengthAdjust="spacingAndGlyphs" fill="#e6e6e6">DeltaL</text>
<text x="482.3" y="363.5" font-size="15" text-anchor="middle" textLength="37" lengthAdjust="spacingAndGlyphs" fill="#e6e6e6">100%</text>
<rect x="424.70" y="209.20" width="111.90" height="33.70" fill="url(#g4)" stroke="#000" stroke-width="1.6"/>
<line x1="410.70" y1="115.70" x2="552.50" y2="115.70" stroke="#e01010" stroke-width="1.6"/>
<line x1="410.70" y1="300.30" x2="552.50" y2="300.30" stroke="#e01010" stroke-width="1.6"/>
<line x1="410.70" y1="180.50" x2="552.50" y2="180.50" stroke="#ffff00" stroke-width="1.3"/>
<line x1="410.70" y1="235.50" x2="552.50" y2="235.50" stroke="#ffff00" stroke-width="1.3"/>
<line x1="410.70" y1="198.77" x2="552.50" y2="198.77" stroke="#0a780a" stroke-width="1.6"/>
<line x1="410.70" y1="217.23" x2="552.50" y2="217.23" stroke="#0a780a" stroke-width="1.6"/>
<rect x="606.70" y="69.80" width="142.50" height="276.90" fill="#242424"/>
<line x1="606.70" y1="117.00" x2="749.20" y2="117.00" stroke="#8a8a8a" stroke-width="1.3"/>
<line x1="606.70" y1="163.15" x2="749.20" y2="163.15" stroke="#8a8a8a" stroke-width="1.3"/>
<line x1="606.70" y1="209.30" x2="749.20" y2="209.30" stroke="#8a8a8a" stroke-width="1.3"/>
<line x1="606.70" y1="255.45" x2="749.20" y2="255.45" stroke="#8a8a8a" stroke-width="1.3"/>
<line x1="606.70" y1="301.60" x2="749.20" y2="301.60" stroke="#8a8a8a" stroke-width="1.3"/>
<line x1="606.20" y1="69.80" x2="749.70" y2="69.80" stroke="#8a8a8a" stroke-width="2.5"/>
<line x1="606.70" y1="69.80" x2="606.70" y2="346.70" stroke="#8a8a8a" stroke-width="1.3"/>
<line x1="749.20" y1="69.80" x2="749.20" y2="346.70" stroke="#8a8a8a" stroke-width="1.3"/>
<line x1="606.70" y1="346.70" x2="749.20" y2="346.70" stroke="#8a8a8a" stroke-width="1.6"/>
<line x1="600.70" y1="69.75" x2="606.70" y2="69.75" stroke="#d8d8d8" stroke-width="1.6"/>
<text x="600.4000000000001" y="74.84839999999998" font-size="14.8" text-anchor="end" fill="#e6e6e6">15</text>
<line x1="600.70" y1="117.00" x2="606.70" y2="117.00" stroke="#d8d8d8" stroke-width="1.6"/>
<text x="600.4000000000001" y="122.09839999999998" font-size="14.8" text-anchor="end" fill="#e6e6e6">10</text>
<line x1="600.70" y1="163.15" x2="606.70" y2="163.15" stroke="#d8d8d8" stroke-width="1.6"/>
<text x="600.4000000000001" y="168.2484" font-size="14.8" text-anchor="end" fill="#e6e6e6">5</text>
<line x1="600.70" y1="209.30" x2="606.70" y2="209.30" stroke="#d8d8d8" stroke-width="1.6"/>
<text x="600.4000000000001" y="214.3984" font-size="14.8" text-anchor="end" fill="#e6e6e6">0</text>
<line x1="600.70" y1="255.45" x2="606.70" y2="255.45" stroke="#d8d8d8" stroke-width="1.6"/>
<text x="600.4000000000001" y="260.5484" font-size="14.8" text-anchor="end" fill="#e6e6e6">-5</text>
<line x1="600.70" y1="301.60" x2="606.70" y2="301.60" stroke="#d8d8d8" stroke-width="1.6"/>
<text x="600.4000000000001" y="306.69840000000005" font-size="14.8" text-anchor="end" fill="#e6e6e6">-10</text>
<line x1="600.70" y1="346.65" x2="606.70" y2="346.65" stroke="#d8d8d8" stroke-width="1.6"/>
<text x="600.4000000000001" y="351.74840000000006" font-size="14.8" text-anchor="end" fill="#e6e6e6">-15</text>
<line x1="606.70" y1="346.70" x2="606.70" y2="353.00" stroke="#d8d8d8" stroke-width="1.7"/>
<line x1="749.20" y1="346.70" x2="749.20" y2="353.00" stroke="#d8d8d8" stroke-width="1.7"/>
<text x="664.5" y="64" font-size="15.8" text-anchor="middle" textLength="44.6" lengthAdjust="spacingAndGlyphs" fill="#e6e6e6">DeltaC</text>
<text x="678.5" y="363.5" font-size="15" text-anchor="middle" textLength="37" lengthAdjust="spacingAndGlyphs" fill="#e6e6e6">100%</text>
<rect x="620.70" y="176.40" width="111.90" height="31.40" fill="url(#g5)" stroke="#000" stroke-width="1.6"/>
<line x1="606.70" y1="115.70" x2="749.20" y2="115.70" stroke="#e01010" stroke-width="1.6"/>
<line x1="606.70" y1="300.30" x2="749.20" y2="300.30" stroke="#e01010" stroke-width="1.6"/>
<line x1="606.70" y1="180.50" x2="749.20" y2="180.50" stroke="#ffff00" stroke-width="1.3"/>
<line x1="606.70" y1="235.50" x2="749.20" y2="235.50" stroke="#ffff00" stroke-width="1.3"/>
<line x1="606.70" y1="198.77" x2="749.20" y2="198.77" stroke="#0a780a" stroke-width="1.6"/>
<line x1="606.70" y1="217.23" x2="749.20" y2="217.23" stroke="#0a780a" stroke-width="1.6"/>
<rect x="803.70" y="69.80" width="142.10" height="276.90" fill="#242424"/>
<line x1="803.70" y1="117.00" x2="945.80" y2="117.00" stroke="#8a8a8a" stroke-width="1.3"/>
<line x1="803.70" y1="163.15" x2="945.80" y2="163.15" stroke="#8a8a8a" stroke-width="1.3"/>
<line x1="803.70" y1="209.30" x2="945.80" y2="209.30" stroke="#8a8a8a" stroke-width="1.3"/>
<line x1="803.70" y1="255.45" x2="945.80" y2="255.45" stroke="#8a8a8a" stroke-width="1.3"/>
<line x1="803.70" y1="301.60" x2="945.80" y2="301.60" stroke="#8a8a8a" stroke-width="1.3"/>
<line x1="803.20" y1="69.80" x2="946.30" y2="69.80" stroke="#8a8a8a" stroke-width="2.5"/>
<line x1="803.70" y1="69.80" x2="803.70" y2="346.70" stroke="#8a8a8a" stroke-width="1.3"/>
<line x1="945.80" y1="69.80" x2="945.80" y2="346.70" stroke="#8a8a8a" stroke-width="1.3"/>
<line x1="803.70" y1="346.70" x2="945.80" y2="346.70" stroke="#8a8a8a" stroke-width="1.6"/>
<line x1="797.70" y1="69.75" x2="803.70" y2="69.75" stroke="#d8d8d8" stroke-width="1.6"/>
<text x="797.4000000000001" y="74.84839999999998" font-size="14.8" text-anchor="end" fill="#e6e6e6">15</text>
<line x1="797.70" y1="117.00" x2="803.70" y2="117.00" stroke="#d8d8d8" stroke-width="1.6"/>
<text x="797.4000000000001" y="122.09839999999998" font-size="14.8" text-anchor="end" fill="#e6e6e6">10</text>
<line x1="797.70" y1="163.15" x2="803.70" y2="163.15" stroke="#d8d8d8" stroke-width="1.6"/>
<text x="797.4000000000001" y="168.2484" font-size="14.8" text-anchor="end" fill="#e6e6e6">5</text>
<line x1="797.70" y1="209.30" x2="803.70" y2="209.30" stroke="#d8d8d8" stroke-width="1.6"/>
<text x="797.4000000000001" y="214.3984" font-size="14.8" text-anchor="end" fill="#e6e6e6">0</text>
<line x1="797.70" y1="255.45" x2="803.70" y2="255.45" stroke="#d8d8d8" stroke-width="1.6"/>
<text x="797.4000000000001" y="260.5484" font-size="14.8" text-anchor="end" fill="#e6e6e6">-5</text>
<line x1="797.70" y1="301.60" x2="803.70" y2="301.60" stroke="#d8d8d8" stroke-width="1.6"/>
<text x="797.4000000000001" y="306.69840000000005" font-size="14.8" text-anchor="end" fill="#e6e6e6">-10</text>
<line x1="797.70" y1="346.65" x2="803.70" y2="346.65" stroke="#d8d8d8" stroke-width="1.6"/>
<text x="797.4000000000001" y="351.74840000000006" font-size="14.8" text-anchor="end" fill="#e6e6e6">-15</text>
<line x1="803.70" y1="346.70" x2="803.70" y2="353.00" stroke="#d8d8d8" stroke-width="1.7"/>
<line x1="945.80" y1="346.70" x2="945.80" y2="353.00" stroke="#d8d8d8" stroke-width="1.7"/>
<text x="860.6" y="64" font-size="15.8" text-anchor="middle" textLength="45.8" lengthAdjust="spacingAndGlyphs" fill="#e6e6e6">DeltaH</text>
<text x="874.6" y="363.5" font-size="15" text-anchor="middle" textLength="37" lengthAdjust="spacingAndGlyphs" fill="#e6e6e6">100%</text>
<rect x="817.70" y="209.20" width="111.90" height="67.80" fill="url(#g6)" stroke="#000" stroke-width="1.6"/>
<line x1="803.70" y1="115.70" x2="945.80" y2="115.70" stroke="#e01010" stroke-width="1.6"/>
<line x1="803.70" y1="300.30" x2="945.80" y2="300.30" stroke="#e01010" stroke-width="1.6"/>
<line x1="803.70" y1="180.50" x2="945.80" y2="180.50" stroke="#ffff00" stroke-width="1.3"/>
<line x1="803.70" y1="235.50" x2="945.80" y2="235.50" stroke="#ffff00" stroke-width="1.3"/>
<line x1="803.70" y1="198.77" x2="945.80" y2="198.77" stroke="#0a780a" stroke-width="1.6"/>
<line x1="803.70" y1="217.23" x2="945.80" y2="217.23" stroke="#0a780a" stroke-width="1.6"/>
<rect x="342.00" y="380.30" width="638.00" height="168.50" fill="#000"/>
<rect x="363.60" y="388.3" width="107.0" height="59" fill="#c3bba3" stroke="#ececec" stroke-width="1.3"/>
<rect x="363.60" y="464.6" width="107.0" height="59.6" fill="#c1c0a5" stroke="#ececec" stroke-width="1.3"/>
<rect x="365.00" y="389.7" width="104.2" height="56.2" fill="none" stroke="#000" stroke-opacity="0.2" stroke-width="1"/>
<rect x="365.00" y="466" width="104.2" height="56.8" fill="none" stroke="#000" stroke-opacity="0.2" stroke-width="1"/>
<text x="416.90000000000003" y="540.1" font-size="12.2" text-anchor="middle" font-weight="bold" fill="#fff">20%</text>
<rect x="488.60" y="388.3" width="105.9" height="59" fill="#c2b886" stroke="#ececec" stroke-width="1.3"/>
<rect x="488.60" y="464.6" width="105.9" height="59.6" fill="#c1bf8a" stroke="#ececec" stroke-width="1.3"/>
<rect x="490.00" y="389.7" width="103.10000000000001" height="56.2" fill="none" stroke="#000" stroke-opacity="0.2" stroke-width="1"/>
<rect x="490.00" y="466" width="103.10000000000001" height="56.8" fill="none" stroke="#000" stroke-opacity="0.2" stroke-width="1"/>
<text x="541.9" y="540.1" font-size="12.2" text-anchor="middle" font-weight="bold" fill="#fff">40%</text>
<rect x="613.60" y="388.3" width="105.9" height="59" fill="#c2b46b" stroke="#ececec" stroke-width="1.3"/>
<rect x="613.60" y="464.6" width="105.9" height="59.6" fill="#c0be6c" stroke="#ececec" stroke-width="1.3"/>
<rect x="615.00" y="389.7" width="103.10000000000001" height="56.2" fill="none" stroke="#000" stroke-opacity="0.2" stroke-width="1"/>
<rect x="615.00" y="466" width="103.10000000000001" height="56.8" fill="none" stroke="#000" stroke-opacity="0.2" stroke-width="1"/>
<text x="666.9" y="540.1" font-size="12.2" text-anchor="middle" font-weight="bold" fill="#fff">60%</text>
<rect x="738.60" y="388.3" width="105.9" height="59" fill="#c2b047" stroke="#ececec" stroke-width="1.3"/>
<rect x="738.60" y="464.6" width="105.9" height="59.6" fill="#c0bf4a" stroke="#ececec" stroke-width="1.3"/>
<rect x="740.00" y="389.7" width="103.10000000000001" height="56.2" fill="none" stroke="#000" stroke-opacity="0.2" stroke-width="1"/>
<rect x="740.00" y="466" width="103.10000000000001" height="56.8" fill="none" stroke="#000" stroke-opacity="0.2" stroke-width="1"/>
<text x="791.9" y="540.1" font-size="12.2" text-anchor="middle" font-weight="bold" fill="#fff">80%</text>
<rect x="863.60" y="388.3" width="105.9" height="59" fill="#c4b000" stroke="#ececec" stroke-width="1.3"/>
<rect x="863.60" y="464.6" width="105.9" height="59.6" fill="#c4c41e" stroke="#ececec" stroke-width="1.3"/>
<rect x="865.00" y="389.7" width="103.10000000000001" height="56.2" fill="none" stroke="#000" stroke-opacity="0.2" stroke-width="1"/>
<rect x="865.00" y="466" width="103.10000000000001" height="56.8" fill="none" stroke="#000" stroke-opacity="0.2" stroke-width="1"/>
<text x="916.9" y="540.1" font-size="12.2" text-anchor="middle" font-weight="bold" fill="#fff">100%</text>
<text transform="translate(355,418) rotate(-90)" font-size="12" text-anchor="middle" font-weight="bold" fill="#fff">Actual</text>
<text transform="translate(355,494) rotate(-90)" font-size="12" text-anchor="middle" font-weight="bold" fill="#fff">Target</text>
<rect x="356.60" y="581.30" width="623.40" height="256.50" fill="#242424"/>
<line x1="356.60" y1="667.40" x2="980.00" y2="667.40" stroke="#8a8a8a" stroke-width="1.3"/>
<line x1="356.60" y1="752.90" x2="980.00" y2="752.90" stroke="#8a8a8a" stroke-width="1.3"/>
<line x1="356.10" y1="581.30" x2="980.50" y2="581.30" stroke="#8a8a8a" stroke-width="2.5"/>
<line x1="356.60" y1="581.30" x2="356.60" y2="837.80" stroke="#8a8a8a" stroke-width="1.3"/>
<line x1="980.00" y1="581.30" x2="980.00" y2="837.80" stroke="#8a8a8a" stroke-width="1.3"/>
<line x1="356.60" y1="837.80" x2="980.00" y2="837.80" stroke="#8a8a8a" stroke-width="1.6"/>
<line x1="350.60" y1="581.50" x2="356.60" y2="581.50" stroke="#d8d8d8" stroke-width="1.6"/>
<text x="349.6" y="586.5984" font-size="14.8" text-anchor="end" fill="#e6e6e6">15</text>
<line x1="350.60" y1="667.40" x2="356.60" y2="667.40" stroke="#d8d8d8" stroke-width="1.6"/>
<text x="349.6" y="672.4984" font-size="14.8" text-anchor="end" fill="#e6e6e6">10</text>
<line x1="350.60" y1="752.90" x2="356.60" y2="752.90" stroke="#d8d8d8" stroke-width="1.6"/>
<text x="349.6" y="757.9984" font-size="14.8" text-anchor="end" fill="#e6e6e6">5</text>
<line x1="350.60" y1="838.00" x2="356.60" y2="838.00" stroke="#d8d8d8" stroke-width="1.6"/>
<text x="349.6" y="843.0984" font-size="14.8" text-anchor="end" fill="#e6e6e6">0</text>
<line x1="356.60" y1="837.80" x2="356.60" y2="844.10" stroke="#d8d8d8" stroke-width="1.7"/>
<line x1="460.50" y1="837.80" x2="460.50" y2="844.10" stroke="#d8d8d8" stroke-width="1.7"/>
<line x1="564.40" y1="837.80" x2="564.40" y2="844.10" stroke="#d8d8d8" stroke-width="1.7"/>
<line x1="668.30" y1="837.80" x2="668.30" y2="844.10" stroke="#d8d8d8" stroke-width="1.7"/>
<line x1="772.20" y1="837.80" x2="772.20" y2="844.10" stroke="#d8d8d8" stroke-width="1.7"/>
<line x1="876.10" y1="837.80" x2="876.10" y2="844.10" stroke="#d8d8d8" stroke-width="1.7"/>
<line x1="980.00" y1="837.80" x2="980.00" y2="844.10" stroke="#d8d8d8" stroke-width="1.7"/>
<text x="657.6" y="576" font-size="15.8" text-anchor="middle" textLength="81.4" lengthAdjust="spacingAndGlyphs" fill="#e6e6e6">DeltaE 2000</text>
<text x="408.05" y="854.6" font-size="15" text-anchor="middle" fill="#e6e6e6">100</text>
<text x="511.95000000000005" y="854.6" font-size="15" text-anchor="middle" fill="#e6e6e6">20%</text>
<text x="615.85" y="854.6" font-size="15" text-anchor="middle" fill="#e6e6e6">40%</text>
<text x="719.75" y="854.6" font-size="15" text-anchor="middle" fill="#e6e6e6">60%</text>
<text x="823.6500000000001" y="854.6" font-size="15" text-anchor="middle" fill="#e6e6e6">80%</text>
<text x="927.5500000000001" y="854.6" font-size="15" text-anchor="middle" fill="#e6e6e6">100%</text>
<clipPath id="dEclip"><rect x="356.6" y="581.3" width="623.4" height="256.5"/></clipPath>
<g clip-path="url(#dEclip)">
<rect x="471.20" y="759.60" width="9.90" height="80.20" fill="url(#g7)" stroke="#000" stroke-width="1.5"/>
<rect x="482.32" y="753.50" width="9.90" height="86.30" fill="url(#g8)" stroke="#000" stroke-width="1.5"/>
<rect x="493.44" y="780.80" width="9.90" height="59.00" fill="url(#g9)" stroke="#000" stroke-width="1.5"/>
<rect x="504.56" y="788.80" width="9.90" height="51.00" fill="url(#g10)" stroke="#000" stroke-width="1.5"/>
<rect x="515.68" y="765.40" width="9.90" height="74.40" fill="url(#g11)" stroke="#000" stroke-width="1.5"/>
<rect x="526.80" y="794.60" width="9.90" height="45.20" fill="url(#g12)" stroke="#000" stroke-width="1.5"/>
<rect x="575.10" y="746.50" width="9.90" height="93.30" fill="url(#g13)" stroke="#000" stroke-width="1.5"/>
<rect x="586.22" y="732.70" width="9.90" height="107.10" fill="url(#g14)" stroke="#000" stroke-width="1.5"/>
<rect x="597.34" y="756.70" width="9.90" height="83.10" fill="url(#g15)" stroke="#000" stroke-width="1.5"/>
<rect x="608.46" y="767.00" width="9.90" height="72.80" fill="url(#g16)" stroke="#000" stroke-width="1.5"/>
<rect x="619.58" y="735.60" width="9.90" height="104.20" fill="url(#g17)" stroke="#000" stroke-width="1.5"/>
<rect x="630.70" y="782.10" width="9.90" height="57.70" fill="url(#g18)" stroke="#000" stroke-width="1.5"/>
<rect x="679.00" y="732.70" width="9.90" height="107.10" fill="url(#g19)" stroke="#000" stroke-width="1.5"/>
<rect x="690.12" y="717.30" width="9.90" height="122.50" fill="url(#g20)" stroke="#000" stroke-width="1.5"/>
<rect x="701.24" y="705.00" width="9.90" height="134.80" fill="url(#g21)" stroke="#000" stroke-width="1.5"/>
<rect x="712.36" y="750.00" width="9.90" height="89.80" fill="url(#g22)" stroke="#000" stroke-width="1.5"/>
<rect x="723.48" y="711.50" width="9.90" height="128.30" fill="url(#g23)" stroke="#000" stroke-width="1.5"/>
<rect x="734.60" y="772.70" width="9.90" height="67.10" fill="url(#g24)" stroke="#000" stroke-width="1.5"/>
<rect x="782.90" y="724.20" width="9.90" height="115.60" fill="url(#g25)" stroke="#000" stroke-width="1.5"/>
<rect x="794.02" y="703.00" width="9.90" height="136.80" fill="url(#g26)" stroke="#000" stroke-width="1.5"/>
<rect x="805.14" y="652.70" width="9.90" height="187.10" fill="url(#g27)" stroke="#000" stroke-width="1.5"/>
<rect x="816.26" y="745.80" width="9.90" height="94.00" fill="url(#g28)" stroke="#000" stroke-width="1.5"/>
<rect x="827.38" y="685.80" width="9.90" height="154.00" fill="url(#g29)" stroke="#000" stroke-width="1.5"/>
<rect x="838.50" y="763.80" width="9.90" height="76.00" fill="url(#g30)" stroke="#000" stroke-width="1.5"/>
<rect x="886.80" y="727.30" width="9.90" height="112.50" fill="url(#g31)" stroke="#000" stroke-width="1.5"/>
<rect x="897.92" y="683.50" width="9.90" height="156.30" fill="url(#g32)" stroke="#000" stroke-width="1.5"/>
<rect x="909.04" y="570.00" width="9.90" height="269.80" fill="url(#g33)" stroke="#000" stroke-width="1.5"/>
<rect x="920.16" y="737.70" width="9.90" height="102.10" fill="url(#g34)" stroke="#000" stroke-width="1.5"/>
<rect x="931.28" y="657.30" width="9.90" height="182.50" fill="url(#g35)" stroke="#000" stroke-width="1.5"/>
<rect x="942.40" y="752.70" width="9.90" height="87.10" fill="url(#g36)" stroke="#000" stroke-width="1.5"/>
<rect x="433.50" y="817.60" width="9.90" height="22.20" fill="url(#g37)" stroke="#000" stroke-width="1.5"/>
</g>
<line x1="356.60" y1="666.00" x2="980.00" y2="666.00" stroke="#d81010" stroke-width="2.2"/>
<line x1="356.60" y1="786.50" x2="980.00" y2="786.50" stroke="#ffff00" stroke-width="1.2"/>
<line x1="356.60" y1="820.70" x2="980.00" y2="820.70" stroke="#0a780a" stroke-width="1.6"/>
<rect x="1001.00" y="36.80" width="712.10" height="7.30" fill="#0586a7"/>
<rect x="1001.00" y="618.40" width="712.10" height="7.60" fill="#0586a7"/>
<rect x="1001.00" y="36.80" width="7.00" height="589.20" fill="#0586a7"/>
<rect x="1709.00" y="36.80" width="4.10" height="589.20" fill="#0586a7"/>
<text x="1358.3" y="63" font-size="15.8" text-anchor="middle" textLength="77.6" lengthAdjust="spacingAndGlyphs" fill="#e6e6e6">CIE 1931 xy</text>
<path d="M1175.8 586.0 L1175.8 586.0 L1175.5 586.1 L1175.2 586.1 L1174.8 586.1 L1174.3 586.1 L1173.7 585.9 L1173.1 585.7 L1172.4 585.3 L1171.7 584.8 L1170.8 584.2 L1169.7 583.4 L1168.1 582.3 L1166.1 581.0 L1164.0 579.5 L1161.9 578.1 L1160.3 577.0 L1158.9 576.1 L1157.5 575.0 L1155.8 573.8 L1153.9 572.3 L1151.9 570.7 L1149.8 568.9 L1147.6 566.9 L1145.2 564.4 L1142.5 561.3 L1139.4 557.6 L1136.1 553.3 L1132.6 548.2 L1128.7 542.3 L1124.6 535.3 L1120.2 527.1 L1115.4 517.7 L1110.1 506.8 L1104.4 494.5 L1098.3 480.4 L1092.1 464.7 L1086.0 447.0 L1079.8 427.5 L1073.6 406.2 L1067.6 383.1 L1061.7 358.7 L1056.3 333.2 L1051.4 307.2 L1047.3 281.1 L1044.1 255.3 L1041.9 230.2 L1040.7 206.1 L1040.7 183.1 L1042.0 161.6 L1044.6 141.8 L1048.6 124.0 L1054.0 108.5 L1060.7 95.7 L1068.5 85.7 L1077.2 78.5 L1086.6 74.1 L1096.6 72.1 L1106.9 72.2 L1117.5 73.9 L1128.3 76.9 L1139.1 80.6 L1149.8 84.8 L1160.4 89.4 L1170.8 94.3 L1180.8 99.3 L1190.8 104.5 L1200.6 109.9 L1210.3 115.6 L1219.9 121.4 L1229.5 127.5 L1239.1 133.7 L1248.6 140.0 L1258.1 146.5 L1267.6 153.1 L1277.1 159.9 L1286.5 166.7 L1296.0 173.6 L1305.4 180.6 L1314.9 187.6 L1324.4 194.7 L1333.8 201.9 L1343.3 209.1 L1352.7 216.3 L1362.1 223.5 L1371.5 230.8 L1380.9 238.0 L1390.2 245.2 L1399.5 252.4 L1408.7 259.5 L1417.8 266.6 L1426.8 273.6 L1435.7 280.5 L1444.5 287.4 L1453.2 294.2 L1461.8 300.8 L1470.2 307.4 L1478.4 313.8 L1486.5 320.0 L1494.3 326.1 L1501.9 332.0 L1509.3 337.8 L1516.3 343.3 L1522.9 348.4 L1529.3 353.4 L1535.4 358.2 L1541.5 362.8 L1547.2 367.3 L1552.3 371.2 L1556.7 374.6 L1561.0 378.0 L1566.2 382.0 L1572.8 387.1 L1580.0 392.8 L1586.7 398.0 L1592.0 402.1 L1596.2 405.3 L1599.7 408.1 L1602.9 410.6 L1605.9 412.9 L1608.5 414.9 L1610.7 416.7 L1612.5 418.1 L1614.0 419.2 L1615.3 420.2 L1616.3 421.0 L1617.2 421.7 L1618.2 422.5 L1619.1 423.2 L1619.9 423.8 L1620.6 424.3 L1620.9 424.6 L1621.0 424.6 Z M1545.8 384.5 L1275.8 217.1 L1156.7 551.9 Z" fill="#000" fill-opacity="0.4" fill-rule="evenodd" style="filter:blur(0.7px)"/>
<line x1="1037.10" y1="67.80" x2="1512.80" y2="67.80" stroke="#8a8a8a" stroke-width="2"/>
<line x1="1037.60" y1="67.80" x2="1037.60" y2="589.10" stroke="#8a8a8a" stroke-width="1.4"/>
<line x1="1705.20" y1="260.60" x2="1705.20" y2="589.10" stroke="#8a8a8a" stroke-width="1.4"/>
<line x1="1037.60" y1="589.10" x2="1705.70" y2="589.10" stroke="#8a8a8a" stroke-width="1.8"/>
<line x1="1032.10" y1="589.60" x2="1037.60" y2="589.60" stroke="#e0e0e0" stroke-width="1.5"/>
<text x="1031.3999999999999" y="596.5" font-size="15.9" text-anchor="end" textLength="8.4" lengthAdjust="spacingAndGlyphs" fill="#e6e6e6">0</text>
<line x1="1037.60" y1="589.10" x2="1037.60" y2="594.90" stroke="#e0e0e0" stroke-width="1.5"/>
<text x="1037.6" y="611" font-size="15.9" text-anchor="middle" textLength="8.4" lengthAdjust="spacingAndGlyphs" fill="#e6e6e6">0</text>
<line x1="1032.10" y1="527.60" x2="1037.60" y2="527.60" stroke="#e0e0e0" stroke-width="1.5"/>
<text x="1031.3999999999999" y="534.5" font-size="15.9" text-anchor="end" textLength="20.6" lengthAdjust="spacingAndGlyphs" fill="#e6e6e6">0,1</text>
<line x1="1117.00" y1="589.10" x2="1117.00" y2="594.90" stroke="#e0e0e0" stroke-width="1.5"/>
<text x="1117.0" y="611" font-size="15.9" text-anchor="middle" textLength="20.6" lengthAdjust="spacingAndGlyphs" fill="#e6e6e6">0,1</text>
<line x1="1032.10" y1="465.60" x2="1037.60" y2="465.60" stroke="#e0e0e0" stroke-width="1.5"/>
<text x="1031.3999999999999" y="472.5" font-size="15.9" text-anchor="end" textLength="20.6" lengthAdjust="spacingAndGlyphs" fill="#e6e6e6">0,2</text>
<line x1="1196.40" y1="589.10" x2="1196.40" y2="594.90" stroke="#e0e0e0" stroke-width="1.5"/>
<text x="1196.3999999999999" y="611" font-size="15.9" text-anchor="middle" textLength="20.6" lengthAdjust="spacingAndGlyphs" fill="#e6e6e6">0,2</text>
<line x1="1032.10" y1="403.60" x2="1037.60" y2="403.60" stroke="#e0e0e0" stroke-width="1.5"/>
<text x="1031.3999999999999" y="410.5" font-size="15.9" text-anchor="end" textLength="20.6" lengthAdjust="spacingAndGlyphs" fill="#e6e6e6">0,3</text>
<line x1="1275.80" y1="589.10" x2="1275.80" y2="594.90" stroke="#e0e0e0" stroke-width="1.5"/>
<text x="1275.8" y="611" font-size="15.9" text-anchor="middle" textLength="20.6" lengthAdjust="spacingAndGlyphs" fill="#e6e6e6">0,3</text>
<line x1="1032.10" y1="341.60" x2="1037.60" y2="341.60" stroke="#e0e0e0" stroke-width="1.5"/>
<text x="1031.3999999999999" y="348.5" font-size="15.9" text-anchor="end" textLength="20.6" lengthAdjust="spacingAndGlyphs" fill="#e6e6e6">0,4</text>
<line x1="1355.20" y1="589.10" x2="1355.20" y2="594.90" stroke="#e0e0e0" stroke-width="1.5"/>
<text x="1355.1999999999998" y="611" font-size="15.9" text-anchor="middle" textLength="20.6" lengthAdjust="spacingAndGlyphs" fill="#e6e6e6">0,4</text>
<line x1="1032.10" y1="279.60" x2="1037.60" y2="279.60" stroke="#e0e0e0" stroke-width="1.5"/>
<text x="1031.3999999999999" y="286.5" font-size="15.9" text-anchor="end" textLength="20.6" lengthAdjust="spacingAndGlyphs" fill="#e6e6e6">0,5</text>
<line x1="1434.60" y1="589.10" x2="1434.60" y2="594.90" stroke="#e0e0e0" stroke-width="1.5"/>
<text x="1434.6" y="611" font-size="15.9" text-anchor="middle" textLength="20.6" lengthAdjust="spacingAndGlyphs" fill="#e6e6e6">0,5</text>
<line x1="1032.10" y1="217.60" x2="1037.60" y2="217.60" stroke="#e0e0e0" stroke-width="1.5"/>
<text x="1031.3999999999999" y="224.50000000000003" font-size="15.9" text-anchor="end" textLength="20.6" lengthAdjust="spacingAndGlyphs" fill="#e6e6e6">0,6</text>
<line x1="1514.00" y1="589.10" x2="1514.00" y2="594.90" stroke="#e0e0e0" stroke-width="1.5"/>
<text x="1514.0" y="611" font-size="15.9" text-anchor="middle" textLength="20.6" lengthAdjust="spacingAndGlyphs" fill="#e6e6e6">0,6</text>
<line x1="1032.10" y1="155.60" x2="1037.60" y2="155.60" stroke="#e0e0e0" stroke-width="1.5"/>
<text x="1031.3999999999999" y="162.50000000000003" font-size="15.9" text-anchor="end" textLength="20.6" lengthAdjust="spacingAndGlyphs" fill="#e6e6e6">0,7</text>
<line x1="1593.40" y1="589.10" x2="1593.40" y2="594.90" stroke="#e0e0e0" stroke-width="1.5"/>
<text x="1593.3999999999999" y="611" font-size="15.9" text-anchor="middle" textLength="20.6" lengthAdjust="spacingAndGlyphs" fill="#e6e6e6">0,7</text>
<line x1="1032.10" y1="93.60" x2="1037.60" y2="93.60" stroke="#e0e0e0" stroke-width="1.5"/>
<text x="1031.3999999999999" y="100.50000000000003" font-size="15.9" text-anchor="end" textLength="20.6" lengthAdjust="spacingAndGlyphs" fill="#e6e6e6">0,8</text>
<line x1="1672.80" y1="589.10" x2="1672.80" y2="594.90" stroke="#e0e0e0" stroke-width="1.5"/>
<text x="1672.8" y="611" font-size="15.9" text-anchor="middle" textLength="20.6" lengthAdjust="spacingAndGlyphs" fill="#e6e6e6">0,8</text>
<rect x="1276.3" y="343.8" width="14.6" height="14.6" fill="none" stroke="#fff" stroke-width="1.4"/>
<rect x="1274.7" y="310.2" width="14.6" height="14.6" fill="none" stroke="#fff" stroke-width="1.4"/>
<rect x="1272.2" y="278.3" width="14.6" height="14.6" fill="none" stroke="#fff" stroke-width="1.4"/>
<rect x="1270.8" y="245.8" width="14.6" height="14.6" fill="none" stroke="#fff" stroke-width="1.4"/>
<rect x="1268.1" y="209.5" width="14.6" height="14.6" fill="none" stroke="#fff" stroke-width="1.4"/>
<rect x="1295.7" y="355.1" width="14.6" height="14.6" fill="none" stroke="#fff" stroke-width="1.4"/>
<rect x="1312.6" y="332.7" width="14.6" height="14.6" fill="none" stroke="#fff" stroke-width="1.4"/>
<rect x="1329.6" y="310.2" width="14.6" height="14.6" fill="none" stroke="#fff" stroke-width="1.4"/>
<rect x="1345.1" y="290.7" width="14.6" height="14.6" fill="none" stroke="#fff" stroke-width="1.4"/>
<rect x="1363.2" y="268.3" width="14.6" height="14.6" fill="none" stroke="#fff" stroke-width="1.4"/>
<rect x="1265.1" y="377.8" width="14.6" height="14.6" fill="none" stroke="#fff" stroke-width="1.4"/>
<rect x="1250.9" y="377.8" width="14.6" height="14.6" fill="none" stroke="#fff" stroke-width="1.4"/>
<rect x="1237.3" y="377.8" width="14.6" height="14.6" fill="none" stroke="#fff" stroke-width="1.4"/>
<rect x="1223.3" y="377.8" width="14.6" height="14.6" fill="none" stroke="#fff" stroke-width="1.4"/>
<rect x="1208.8" y="377.8" width="14.6" height="14.6" fill="none" stroke="#fff" stroke-width="1.4"/>
<rect x="1280.2" y="398.6" width="14.6" height="14.6" fill="none" stroke="#fff" stroke-width="1.4"/>
<rect x="1281.7" y="421.3" width="14.6" height="14.6" fill="none" stroke="#fff" stroke-width="1.4"/>
<rect x="1281.7" y="440.6" width="14.6" height="14.6" fill="none" stroke="#fff" stroke-width="1.4"/>
<rect x="1283.3" y="463.1" width="14.6" height="14.6" fill="none" stroke="#fff" stroke-width="1.4"/>
<rect x="1284.8" y="485.7" width="14.6" height="14.6" fill="none" stroke="#fff" stroke-width="1.4"/>
<rect x="1252.1" y="411.2" width="14.6" height="14.6" fill="none" stroke="#fff" stroke-width="1.4"/>
<rect x="1227.2" y="443.2" width="14.6" height="14.6" fill="none" stroke="#fff" stroke-width="1.4"/>
<rect x="1202.3" y="475.6" width="14.6" height="14.6" fill="none" stroke="#fff" stroke-width="1.4"/>
<rect x="1176.8" y="508.3" width="14.6" height="14.6" fill="none" stroke="#fff" stroke-width="1.4"/>
<rect x="1149.0" y="544.3" width="14.6" height="14.6" fill="none" stroke="#fff" stroke-width="1.4"/>
<rect x="1329.8" y="377.0" width="14.6" height="14.6" fill="none" stroke="#fff" stroke-width="1.4"/>
<rect x="1382.7" y="376.3" width="14.6" height="14.6" fill="none" stroke="#fff" stroke-width="1.4"/>
<rect x="1430.5" y="376.3" width="14.6" height="14.6" fill="none" stroke="#fff" stroke-width="1.4"/>
<rect x="1481.1" y="376.3" width="14.6" height="14.6" fill="none" stroke="#fff" stroke-width="1.4"/>
<rect x="1538.7" y="376.5" width="14.6" height="14.6" fill="none" stroke="#fff" stroke-width="1.4"/>
<rect x="1279.4" y="378.1" width="14" height="14" fill="none" stroke="#000" stroke-width="1.8"/>
<circle cx="1292.9" cy="354.8" r="4.3" fill="#9ab295" stroke="#000" stroke-width="1.2"/>
<circle cx="1298.9" cy="329.0" r="4.3" fill="#7bb476" stroke="#000" stroke-width="1.2"/>
<circle cx="1305.9" cy="299.0" r="4.3" fill="#55b752" stroke="#000" stroke-width="1.2"/>
<circle cx="1313.1" cy="268.1" r="4.3" fill="#2cba2b" stroke="#000" stroke-width="1.2"/>
<circle cx="1319.9" cy="232.9" r="4.3" fill="#00be00" stroke="#000" stroke-width="1.2"/>
<circle cx="1305.9" cy="363.9" r="4.3" fill="#b3b295" stroke="#000" stroke-width="1.2"/>
<circle cx="1324.0" cy="343.0" r="4.3" fill="#b7b576" stroke="#000" stroke-width="1.2"/>
<circle cx="1343.9" cy="322.9" r="4.3" fill="#bcb852" stroke="#000" stroke-width="1.2"/>
<circle cx="1363.5" cy="301.9" r="4.3" fill="#c2bc2b" stroke="#000" stroke-width="1.2"/>
<circle cx="1386.0" cy="278.6" r="4.3" fill="#c8c000" stroke="#000" stroke-width="1.2"/>
<circle cx="1276.6" cy="384.7" r="4.3" fill="#9ab0ab" stroke="#000" stroke-width="1.2"/>
<circle cx="1265.1" cy="386.0" r="4.3" fill="#7bb1ad" stroke="#000" stroke-width="1.2"/>
<circle cx="1255.4" cy="385.8" r="4.3" fill="#55b2af" stroke="#000" stroke-width="1.2"/>
<circle cx="1243.9" cy="387.8" r="4.3" fill="#2cb3b1" stroke="#000" stroke-width="1.2"/>
<circle cx="1234.5" cy="388.7" r="4.3" fill="#00b4b4" stroke="#000" stroke-width="1.2"/>
<circle cx="1283.6" cy="402.0" r="4.3" fill="#b39aab" stroke="#000" stroke-width="1.2"/>
<circle cx="1278.9" cy="418.5" r="4.3" fill="#b77bad" stroke="#000" stroke-width="1.2"/>
<circle cx="1276.6" cy="432.3" r="4.3" fill="#bc55af" stroke="#000" stroke-width="1.2"/>
<circle cx="1271.9" cy="448.8" r="4.3" fill="#c22cb1" stroke="#000" stroke-width="1.2"/>
<circle cx="1268.0" cy="465.9" r="4.3" fill="#c800b4" stroke="#000" stroke-width="1.2"/>
<circle cx="1260.0" cy="413.1" r="4.3" fill="#9a9aab" stroke="#000" stroke-width="1.2"/>
<circle cx="1236.1" cy="437.8" r="4.3" fill="#7b7bac" stroke="#000" stroke-width="1.2"/>
<circle cx="1213.6" cy="462.0" r="4.3" fill="#5555ad" stroke="#000" stroke-width="1.2"/>
<circle cx="1191.3" cy="485.8" r="4.3" fill="#2c2cae" stroke="#000" stroke-width="1.2"/>
<circle cx="1167.0" cy="510.9" r="4.3" fill="#0000b0" stroke="#000" stroke-width="1.2"/>
<circle cx="1326.9" cy="379.0" r="4.3" fill="#b39a95" stroke="#000" stroke-width="1.2"/>
<circle cx="1369.0" cy="374.9" r="4.3" fill="#b77b76" stroke="#000" stroke-width="1.2"/>
<circle cx="1409.7" cy="370.9" r="4.3" fill="#bc5552" stroke="#000" stroke-width="1.2"/>
<circle cx="1452.9" cy="364.8" r="4.3" fill="#c22c2b" stroke="#000" stroke-width="1.2"/>
<circle cx="1504.2" cy="361.0" r="4.3" fill="#c80000" stroke="#000" stroke-width="1.2"/>
<circle cx="1288.0" cy="382.9" r="4.2" fill="#fff" stroke="#000" stroke-width="1.2"/>
<path d="M1515.3 68.5 L1705.8 68.5 L1705.8 238.7 L1515.3 87.4 Z" fill="#000" fill-opacity="0.4"/>
<rect x="1515.3" y="68.5" width="190.5" height="188.8" fill="none" stroke="#8c8c8c" stroke-width="1.8"/>
<rect x="1602.7" y="155.1" width="14.6" height="14.6" fill="none" stroke="#fff" stroke-width="1.4"/>
<circle cx="1683" cy="183.1" r="4.3" fill="#c8c000" stroke="#000" stroke-width="1.2"/>
<rect x="1003.00" y="634.00" width="526.80" height="31.80" fill="url(#g38)"/>
<rect x="1003.00" y="634.00" width="17.00" height="31.80" fill="#000"/>
<text x="1167.5" y="656.6" font-size="17" fill="#fff" font-family="DejaVu Sans, sans-serif">20%</text>
<text x="1240.8" y="656.6" font-size="17" fill="#fff" font-family="DejaVu Sans, sans-serif">40%</text>
<text x="1314.2" y="656.6" font-size="17" fill="#fff" font-family="DejaVu Sans, sans-serif">60%</text>
<text x="1387.8" y="656.6" font-size="17" fill="#fff" font-family="DejaVu Sans, sans-serif">80%</text>
<text x="1461.4" y="656.6" font-size="17" fill="#fff" font-family="DejaVu Sans, sans-serif">100%</text>
<rect x="1020.00" y="665.80" width="509.80" height="29.50" fill="#404040"/>
<rect x="1003.00" y="665.80" width="17.00" height="29.50" fill="url(#g39)"/>
<text x="1025.3" y="687.4" font-size="17" textLength="70.5" lengthAdjust="spacingAndGlyphs" fill="#f4f4f4" font-family="DejaVu Sans, sans-serif">x: CIE31</text>
<text x="1167.5" y="687.4" font-size="17" fill="#f4f4f4" font-family="DejaVu Sans, sans-serif">0,34</text>
<text x="1240.8" y="687.4" font-size="17" fill="#f4f4f4" font-family="DejaVu Sans, sans-serif">0,36</text>
<text x="1314.2" y="687.4" font-size="17" fill="#f4f4f4" font-family="DejaVu Sans, sans-serif">0,39</text>
<text x="1387.8" y="687.4" font-size="17" fill="#f4f4f4" font-family="DejaVu Sans, sans-serif">0,41</text>
<text x="1461.4" y="687.4" font-size="17" fill="#f4f4f4" font-family="DejaVu Sans, sans-serif">0,44</text>
<rect x="1020.00" y="695.00" width="509.80" height="30.30" fill="#808080"/>
<rect x="1003.00" y="695.00" width="17.00" height="30.30" fill="url(#g40)"/>
<text x="1025.3" y="716.6" font-size="17" textLength="70.5" lengthAdjust="spacingAndGlyphs" fill="#f4f4f4" font-family="DejaVu Sans, sans-serif">y: CIE31</text>
<text x="1167.5" y="716.6" font-size="17" fill="#f4f4f4" font-family="DejaVu Sans, sans-serif">0,36</text>
<text x="1240.8" y="716.6" font-size="17" fill="#f4f4f4" font-family="DejaVu Sans, sans-serif">0,40</text>
<text x="1314.2" y="716.6" font-size="17" fill="#f4f4f4" font-family="DejaVu Sans, sans-serif">0,43</text>
<text x="1387.8" y="716.6" font-size="17" fill="#f4f4f4" font-family="DejaVu Sans, sans-serif">0,46</text>
<text x="1461.4" y="716.6" font-size="17" fill="#f4f4f4" font-family="DejaVu Sans, sans-serif">0,50</text>
<rect x="1020.00" y="725.00" width="509.80" height="29.20" fill="#404040"/>
<rect x="1003.00" y="725.00" width="17.00" height="29.20" fill="url(#g41)"/>
<text x="1025.3" y="746.6" font-size="17" fill="#f4f4f4" font-family="DejaVu Sans, sans-serif">Y</text>
<text x="1167.5" y="746.6" font-size="17" fill="#f4f4f4" font-family="DejaVu Sans, sans-serif">107,67</text>
<text x="1240.8" y="746.6" font-size="17" fill="#f4f4f4" font-family="DejaVu Sans, sans-serif">103,17</text>
<text x="1314.2" y="746.6" font-size="17" fill="#f4f4f4" font-family="DejaVu Sans, sans-serif">99,58</text>
<text x="1387.8" y="746.6" font-size="17" fill="#f4f4f4" font-family="DejaVu Sans, sans-serif">96,57</text>
<text x="1461.4" y="746.6" font-size="17" fill="#f4f4f4" font-family="DejaVu Sans, sans-serif">93,19</text>
<rect x="1020.00" y="753.90" width="509.80" height="29.50" fill="#808080"/>
<rect x="1003.00" y="753.90" width="17.00" height="29.50" fill="url(#g42)"/>
<text x="1025.3" y="775.5" font-size="17" textLength="127.4" lengthAdjust="spacingAndGlyphs" fill="#f4f4f4" font-family="DejaVu Sans, sans-serif">Target x:CIE31</text>
<text x="1167.5" y="775.5" font-size="17" fill="#f4f4f4" font-family="DejaVu Sans, sans-serif">0,33</text>
<text x="1240.8" y="775.5" font-size="17" fill="#f4f4f4" font-family="DejaVu Sans, sans-serif">0,36</text>
<text x="1314.2" y="775.5" font-size="17" fill="#f4f4f4" font-family="DejaVu Sans, sans-serif">0,38</text>
<text x="1387.8" y="775.5" font-size="17" fill="#f4f4f4" font-family="DejaVu Sans, sans-serif">0,40</text>
<text x="1461.4" y="775.5" font-size="17" fill="#f4f4f4" font-family="DejaVu Sans, sans-serif">0,42</text>
<rect x="1020.00" y="783.10" width="509.80" height="29.20" fill="#404040"/>
<rect x="1003.00" y="783.10" width="17.00" height="29.20" fill="url(#g43)"/>
<text x="1025.3" y="804.7" font-size="17" textLength="127.8" lengthAdjust="spacingAndGlyphs" fill="#f4f4f4" font-family="DejaVu Sans, sans-serif">Target y:CIE31</text>
<text x="1167.5" y="804.7" font-size="17" fill="#f4f4f4" font-family="DejaVu Sans, sans-serif">0,36</text>
<text x="1240.8" y="804.7" font-size="17" fill="#f4f4f4" font-family="DejaVu Sans, sans-serif">0,40</text>
<text x="1314.2" y="804.7" font-size="17" fill="#f4f4f4" font-family="DejaVu Sans, sans-serif">0,44</text>
<text x="1387.8" y="804.7" font-size="17" fill="#f4f4f4" font-family="DejaVu Sans, sans-serif">0,47</text>
<text x="1461.4" y="804.7" font-size="17" fill="#f4f4f4" font-family="DejaVu Sans, sans-serif">0,51</text>
<rect x="1020.00" y="812.00" width="509.80" height="29.70" fill="#808080"/>
<rect x="1003.00" y="812.00" width="17.00" height="29.70" fill="url(#g44)"/>
<text x="1025.3" y="833.6" font-size="17" textLength="74.3" lengthAdjust="spacingAndGlyphs" fill="#f4f4f4" font-family="DejaVu Sans, sans-serif">Target Y</text>
<text x="1167.5" y="833.6" font-size="17" fill="#f4f4f4" font-family="DejaVu Sans, sans-serif">111,76</text>
<text x="1240.8" y="833.6" font-size="17" fill="#f4f4f4" font-family="DejaVu Sans, sans-serif">109,80</text>
<text x="1314.2" y="833.6" font-size="17" fill="#f4f4f4" font-family="DejaVu Sans, sans-serif">108,29</text>
<text x="1387.8" y="833.6" font-size="17" fill="#f4f4f4" font-family="DejaVu Sans, sans-serif">107,11</text>
<text x="1461.4" y="833.6" font-size="17" fill="#f4f4f4" font-family="DejaVu Sans, sans-serif">105,96</text>
</svg>
</body></html>
